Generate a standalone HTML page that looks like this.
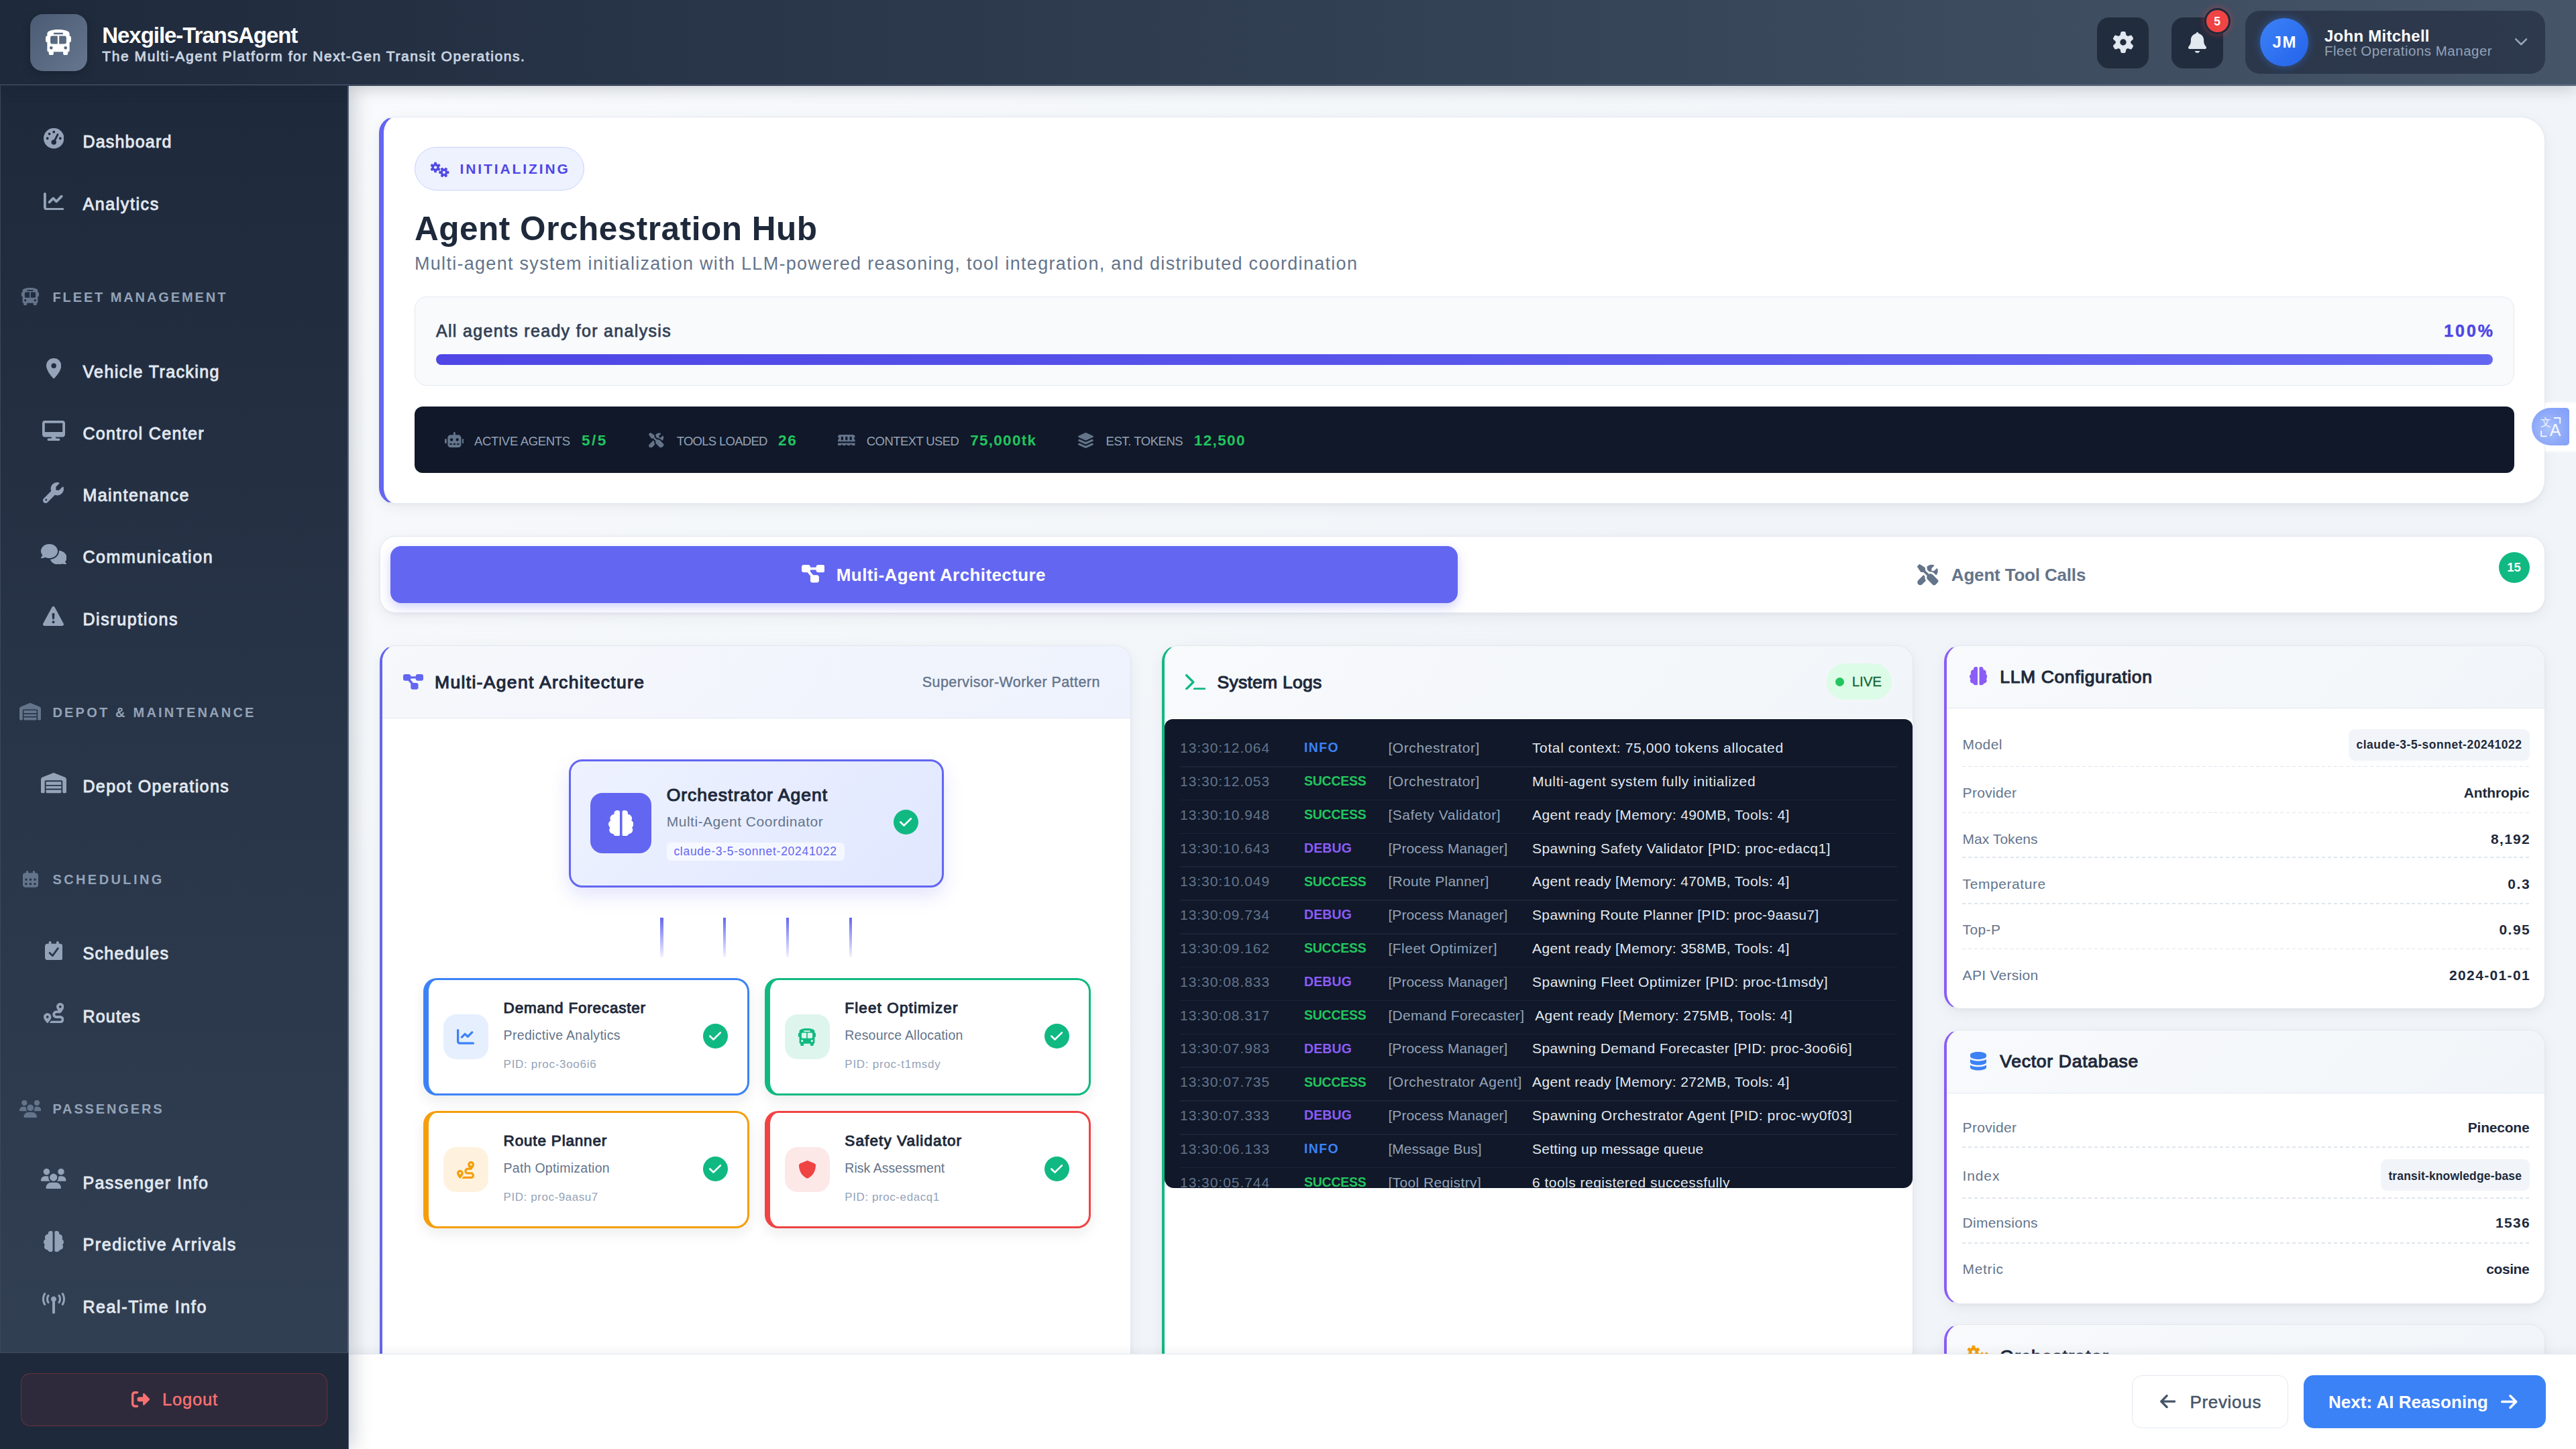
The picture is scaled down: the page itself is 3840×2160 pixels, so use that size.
<!DOCTYPE html>
<html lang="en"><head><meta charset="utf-8"><title>Nexgile-TransAgent</title>
<style>
html,body{margin:0;padding:0;}
body{width:3840px;height:2160px;overflow:hidden;background:#f1f5f9;font-family:"Liberation Sans",sans-serif;}
#root{position:relative;width:3840px;height:2160px;overflow:hidden;background:#f1f5f9;}
#root div,#root svg{position:absolute;box-sizing:border-box;}
.t{white-space:pre;}
.grp{position:absolute;left:0;top:0;width:0;height:0;}

</style></head><body><div id="root">
<main class="grp">
<div style="left:520px;top:128px;width:3320px;height:1892px;background:linear-gradient(135deg,#f8fafc 0%,#f1f5f9 50%,#f1f5f9 100%);"></div>
<div style="left:565px;top:173.5px;width:3229px;height:577px;background:#fff;border:1.5px solid #e2e8f0;border-left:7.5px solid #6366f1;border-radius:24px 36px 36px 24px;box-shadow:0 6px 22px rgba(15,23,42,.055),0 2px 5px rgba(15,23,42,.03);"></div>
<div style="left:618px;top:218.7px;width:253px;height:65px;background:#eef2ff;border:1.5px solid #c7d2fe;border-radius:33px;"></div>
<svg style="left:641.90px;top:241.85px;overflow:visible;" width="27.20" height="22.30" viewBox="0 0 272 223" preserveAspectRatio="none"><path fill="#4f46e5" fill-rule="evenodd" stroke="#4f46e5" stroke-width="8" stroke-linejoin="round" d="M44.75 29.53L54.78 25.07L55.41 1.64L86.59 1.64L87.22 25.07L97.25 29.53L97.25 29.53L106.13 35.98L126.74 24.82L142.33 51.82L122.35 64.08L123.50 75.00L123.50 75.00L122.35 85.92L142.33 98.18L126.74 125.18L106.13 114.02L97.25 120.47L97.25 120.47L87.22 124.93L86.59 148.36L55.41 148.36L54.78 124.93L44.75 120.47L44.75 120.47L35.87 114.02L15.26 125.18L-0.33 98.18L19.65 85.92L18.50 75.00L18.50 75.00L19.65 64.08L-0.33 51.82L15.26 24.82L35.87 35.98L44.75 29.53ZM45.50 75.00a25.50 25.50 0 1 0 51.00 0a25.50 25.50 0 1 0 -51.00 0ZM243.25 124.45L247.60 134.21L270.40 134.82L270.40 165.18L247.60 165.79L243.25 175.55L243.25 175.55L236.97 184.19L247.85 204.25L221.56 219.43L209.62 199.98L199.00 201.10L199.00 201.10L188.38 199.98L176.44 219.43L150.15 204.25L161.03 184.19L154.75 175.55L154.75 175.55L150.40 165.79L127.60 165.18L127.60 134.82L150.40 134.21L154.75 124.45L154.75 124.45L161.03 115.81L150.15 95.75L176.44 80.57L188.38 100.02L199.00 98.90L199.00 98.90L209.62 100.02L221.56 80.57L247.85 95.75L236.97 115.81L243.25 124.45ZM174.18 150.00a24.82 24.82 0 1 0 49.64 0a24.82 24.82 0 1 0 -49.64 0Z"/></svg>
<div class="t" style="left:685.60px;top:241.22px;font-size:21px;line-height:21px;color:#4f46e5;font-weight:700;letter-spacing:2.882px;">INITIALIZING</div>
<div class="t" style="left:618.00px;top:315.70px;font-size:49.5px;line-height:49.5px;color:#1e293b;font-weight:700;letter-spacing:0.521px;">Agent Orchestration Hub</div>
<div class="t" style="left:618.00px;top:380.04px;font-size:27px;line-height:27px;color:#64748b;letter-spacing:1.292px;">Multi-agent system initialization with LLM-powered reasoning, tool integration, and distributed coordination</div>
<div style="left:617.6px;top:441.8px;width:3130.4px;height:133px;background:#f8fafc;border:1.5px solid #e2e8f0;border-radius:18px;"></div>
<div class="t" style="left:650.00px;top:480.84px;font-size:25px;line-height:25px;color:#334155;letter-spacing:1.322px;-webkit-text-stroke:0.75px #334155;">All agents ready for analysis</div>
<div class="t" style="left:3643.30px;top:480.84px;font-size:25px;line-height:25px;color:#4f46e5;font-weight:700;letter-spacing:2.916px;-webkit-text-stroke:0.5px #4f46e5;">100%</div>
<div style="left:650px;top:528px;width:3066px;height:15.5px;background:linear-gradient(90deg,#4f46e5,#6366f1);border-radius:8px;"></div>
<div style="left:617.6px;top:606px;width:3130.4px;height:99px;background:#101829;border-radius:12px;"></div>
<svg style="left:662.50px;top:644.48px;" width="28.80" height="23.04" viewBox="0 -32 640 512" preserveAspectRatio="none"><path fill="#64748b" d="M352 0c0-17.7-14.3-32-32-32s-32 14.3-32 32v64h-96c-53 0-96 43-96 96v224c0 53 43 96 96 96h256c53 0 96-43 96-96V160c0-53-43-96-96-96h-96zM160 368c0-13.3 10.7-24 24-24h32c13.3 0 24 10.7 24 24s-10.7 24-24 24h-32c-13.3 0-24-10.7-24-24m120 0c0-13.3 10.7-24 24-24h32c13.3 0 24 10.7 24 24s-10.7 24-24 24h-32c-13.3 0-24-10.7-24-24m120 0c0-13.3 10.7-24 24-24h32c13.3 0 24 10.7 24 24s-10.7 24-24 24h-32c-13.3 0-24-10.7-24-24M224 176a48 48 0 1 1 0 96 48 48 0 1 1 0-96m144 48a48 48 0 1 1 96 0 48 48 0 1 1-96 0m-304 0c0-17.7-14.3-32-32-32S0 206.3 0 224v96c0 17.7 14.3 32 32 32s32-14.3 32-32zm544-32c-17.7 0-32 14.3-32 32v96c0 17.7 14.3 32 32 32s32-14.3 32-32v-96c0-17.7-14.3-32-32-32"/></svg>
<div class="t" style="left:707.00px;top:648.94px;font-size:18.5px;line-height:18.5px;color:#94a3b8;letter-spacing:-0.318px;">ACTIVE AGENTS</div>
<div class="t" style="left:867.00px;top:645.55px;font-size:22.5px;line-height:22.5px;color:#22c55e;font-weight:700;letter-spacing:2.459px;">5/5</div>
<svg style="left:966.85px;top:644.65px;" width="22.70" height="22.70" viewBox="20.7236 -11.3764 535.501 535.501" preserveAspectRatio="none"><path fill="#64748b" d="M70.8-6.7c5.4-5.4 13.8-6.2 20.2-2l118.9 79.2c8.9 5.9 14.2 15.9 14.2 26.6v49.6l90.8 90.8c33.3-15 73.9-8.9 101.2 18.5l126.1 126.1c18.7 18.7 18.7 49.1 0 67.9l-60.1 60.1c-18.7 18.7-49.1 18.7-67.9 0L288.1 384c-27.4-27.4-33.5-67.9-18.5-101.2L178.8 192h-49.6c-10.7 0-20.7-5.3-26.6-14.2L23.4 58.9c-4.2-6.3-3.4-14.8 2-20.2zm145 303.5c-6.3 36.9 2.3 75.9 26.2 107.2l-94.9 95c-28.1 28.1-73.7 28.1-101.8 0s-28.1-73.7 0-101.8l135.4-135.5 35.2 35.1zM384.1 0c20.1 0 39.4 3.7 57.1 10.5 10 3.8 11.8 16.5 4.3 24.1l-56.7 56.7c-3 3-4.7 7.1-4.7 11.3V144c0 8.8 7.2 16 16 16h41.4c4.2 0 8.3-1.7 11.3-4.7l56.7-56.7c7.6-7.5 20.3-5.7 24.1 4.3 6.8 17.7 10.5 37 10.5 57.1 0 43.2-17.2 82.3-45 111.1L450 222c-33.1-33-78.5-45.7-121.1-38.4l-56.8-56.8V97.1l-.2-5c-.8-12.4-4.4-24.3-10.5-34.9C290.8 22.2 334.8 0 384.1-.1z"/></svg>
<div class="t" style="left:1008.70px;top:648.94px;font-size:18.5px;line-height:18.5px;color:#94a3b8;letter-spacing:-0.718px;">TOOLS LOADED</div>
<div class="t" style="left:1160.00px;top:645.55px;font-size:22.5px;line-height:22.5px;color:#22c55e;font-weight:700;letter-spacing:1.769px;">26</div>
<svg style="left:1249.00px;top:647.70px;" width="25.60" height="16.60" viewBox="0 64 512 384" preserveAspectRatio="none"><path fill="#64748b" d="M64 64C28.7 64 0 92.7 0 128v7.4c0 6.8 4.4 12.6 10.1 16.3C23.3 160.3 32 175.1 32 192s-8.7 31.7-21.9 40.3C4.4 236 0 241.8 0 248.6V304h512v-55.4c0-6.8-4.4-12.6-10.1-16.3-13.2-8.6-21.9-23.4-21.9-40.3s8.7-31.7 21.9-40.3c5.7-3.7 10.1-9.5 10.1-16.3V128c0-35.3-28.7-64-64-64zm448 352v-64H0v64c0 17.7 14.3 32 32 32h64v-24c0-13.3 10.7-24 24-24s24 10.7 24 24v24h88v-24c0-13.3 10.7-24 24-24s24 10.7 24 24v24h88v-24c0-13.3 10.7-24 24-24s24 10.7 24 24v24h64c17.7 0 32-14.3 32-32M160 160v64c0 17.7-14.3 32-32 32s-32-14.3-32-32v-64c0-17.7 14.3-32 32-32s32 14.3 32 32m128 0v64c0 17.7-14.3 32-32 32s-32-14.3-32-32v-64c0-17.7 14.3-32 32-32s32 14.3 32 32m128 0v64c0 17.7-14.3 32-32 32s-32-14.3-32-32v-64c0-17.7 14.3-32 32-32s32 14.3 32 32"/></svg>
<div class="t" style="left:1291.80px;top:648.94px;font-size:18.5px;line-height:18.5px;color:#94a3b8;letter-spacing:-0.583px;">CONTEXT USED</div>
<div class="t" style="left:1446.20px;top:645.55px;font-size:22.5px;line-height:22.5px;color:#22c55e;font-weight:700;letter-spacing:1.282px;">75,000tk</div>
<svg style="left:1607.00px;top:644.50px;" width="23.00" height="23.00" viewBox="0 0.0249996 512 511.95" preserveAspectRatio="none"><path fill="#64748b" d="M232.5 5.2c14.9-6.9 32.1-6.9 47 0l218.6 101c8.5 3.9 13.9 12.4 13.9 21.8s-5.4 17.9-13.9 21.8l-218.6 101c-14.9 6.9-32.1 6.9-47 0l-218.6-101C5.4 145.8 0 137.3 0 128s5.4-17.9 13.9-21.8zM48.1 218.4l164.3 75.9c27.7 12.8 59.6 12.8 87.3 0L464 218.4l34.1 15.8c8.5 3.9 13.9 12.4 13.9 21.8s-5.4 17.9-13.9 21.8l-218.6 101c-14.9 6.9-32.1 6.9-47 0l-218.6-101C5.4 273.8 0 265.3 0 256s5.4-17.9 13.9-21.8L48 218.4zM13.9 362.2 48 346.4l164.3 75.9c27.7 12.8 59.6 12.8 87.3 0l164.3-75.9 34.1 15.8c8.5 3.9 13.9 12.4 13.9 21.8s-5.4 17.9-13.9 21.8l-218.6 101c-14.9 6.9-32.1 6.9-47 0l-218.5-101C5.4 401.8 0 393.3 0 384s5.4-17.9 13.9-21.8"/></svg>
<div class="t" style="left:1648.60px;top:648.94px;font-size:18.5px;line-height:18.5px;color:#94a3b8;letter-spacing:-0.451px;">EST. TOKENS</div>
<div class="t" style="left:1779.80px;top:645.55px;font-size:22.5px;line-height:22.5px;color:#22c55e;font-weight:700;letter-spacing:1.374px;">12,500</div>
<div style="left:566px;top:799px;width:3228px;height:115.3px;background:#fff;border:1.5px solid #e2e8f0;border-radius:24px;box-shadow:0 6px 22px rgba(15,23,42,.055),0 2px 5px rgba(15,23,42,.03);"></div>
<div style="left:582px;top:814.2px;width:1591px;height:84.4px;background:#6366f1;border-radius:16px;box-shadow:0 6px 16px rgba(99,102,241,.3);"></div>
<svg style="left:1194.75px;top:842.35px;" width="34.50" height="26.50" viewBox="0 32 512 448" preserveAspectRatio="none"><path fill="#fff" d="M0 80c0-26.5 21.5-48 48-48h96c26.5 0 48 21.5 48 48v16h128V80c0-26.5 21.5-48 48-48h96c26.5 0 48 21.5 48 48v96c0 26.5-21.5 48-48 48h-96c-26.5 0-48-21.5-48-48v-16H192v16c0 7.3-1.7 14.3-4.6 20.5L256 288h80c26.5 0 48 21.5 48 48v96c0 26.5-21.5 48-48 48h-96c-26.5 0-48-21.5-48-48v-96c0-7.3 1.7-14.3 4.6-20.5L128 224H48c-26.5 0-48-21.5-48-48z"/></svg>
<div class="t" style="left:1246.80px;top:843.59px;font-size:26px;line-height:26px;color:#fff;font-weight:700;letter-spacing:0.409px;">Multi-Agent Architecture</div>
<svg style="left:2858.05px;top:841.25px;" width="31.50" height="31.50" viewBox="20.7236 -11.3764 535.501 535.501" preserveAspectRatio="none"><path fill="#64748b" d="M70.8-6.7c5.4-5.4 13.8-6.2 20.2-2l118.9 79.2c8.9 5.9 14.2 15.9 14.2 26.6v49.6l90.8 90.8c33.3-15 73.9-8.9 101.2 18.5l126.1 126.1c18.7 18.7 18.7 49.1 0 67.9l-60.1 60.1c-18.7 18.7-49.1 18.7-67.9 0L288.1 384c-27.4-27.4-33.5-67.9-18.5-101.2L178.8 192h-49.6c-10.7 0-20.7-5.3-26.6-14.2L23.4 58.9c-4.2-6.3-3.4-14.8 2-20.2zm145 303.5c-6.3 36.9 2.3 75.9 26.2 107.2l-94.9 95c-28.1 28.1-73.7 28.1-101.8 0s-28.1-73.7 0-101.8l135.4-135.5 35.2 35.1zM384.1 0c20.1 0 39.4 3.7 57.1 10.5 10 3.8 11.8 16.5 4.3 24.1l-56.7 56.7c-3 3-4.7 7.1-4.7 11.3V144c0 8.8 7.2 16 16 16h41.4c4.2 0 8.3-1.7 11.3-4.7l56.7-56.7c7.6-7.5 20.3-5.7 24.1 4.3 6.8 17.7 10.5 37 10.5 57.1 0 43.2-17.2 82.3-45 111.1L450 222c-33.1-33-78.5-45.7-121.1-38.4l-56.8-56.8V97.1l-.2-5c-.8-12.4-4.4-24.3-10.5-34.9C290.8 22.2 334.8 0 384.1-.1z"/></svg>
<div class="t" style="left:2908.80px;top:843.79px;font-size:26px;line-height:26px;color:#64748b;font-weight:700;letter-spacing:-0.174px;">Agent Tool Calls</div>
<div style="left:3724.6px;top:823px;width:46px;height:46px;background:#10b981;border-radius:50%;"></div>
<div class="t" style="left:3737.31px;top:836.84px;font-size:18.5px;line-height:18.5px;color:#fff;font-weight:700;">15</div>
<div style="left:565.5px;top:961.7px;width:1120px;height:1100px;background:#fff;border:1.5px solid #e2e8f0;border-left:4.5px solid #6366f1;border-radius:24px;overflow:hidden;box-shadow:0 6px 22px rgba(15,23,42,.055),0 2px 5px rgba(15,23,42,.03);"><div style="left:0;top:0;width:100%;height:108.2px;background:linear-gradient(135deg,#f6f8fb,#eef2fd);border-bottom:1.5px solid #e2e8f0;"></div></div>
<svg style="left:601.30px;top:1004.90px;" width="30.00" height="22.80" viewBox="0 32 512 448" preserveAspectRatio="none"><path fill="#6366f1" d="M0 80c0-26.5 21.5-48 48-48h96c26.5 0 48 21.5 48 48v16h128V80c0-26.5 21.5-48 48-48h96c26.5 0 48 21.5 48 48v96c0 26.5-21.5 48-48 48h-96c-26.5 0-48-21.5-48-48v-16H192v16c0 7.3-1.7 14.3-4.6 20.5L256 288h80c26.5 0 48 21.5 48 48v96c0 26.5-21.5 48-48 48h-96c-26.5 0-48-21.5-48-48v-96c0-7.3 1.7-14.3 4.6-20.5L128 224H48c-26.5 0-48-21.5-48-48z"/></svg>
<div class="t" style="left:648.00px;top:1004.17px;font-size:26.5px;line-height:26.5px;color:#1e293b;letter-spacing:1.334px;-webkit-text-stroke:1.1px #1e293b;">Multi-Agent Architecture</div>
<div class="t" style="left:1374.80px;top:1007.00px;font-size:21.5px;line-height:21.5px;color:#64748b;letter-spacing:0.437px;-webkit-text-stroke:0.4px #64748b;">Supervisor-Worker Pattern</div>
<div style="left:848.4px;top:1131.5px;width:559px;height:191.5px;background:linear-gradient(135deg,#eef2ff,#e0e7ff);border:3px solid #6366f1;border-radius:20px;box-shadow:0 12px 28px rgba(99,102,241,.18);"></div>
<div style="left:880px;top:1182px;width:90.5px;height:90px;background:#6366f1;border-radius:18px;"></div>
<svg style="left:906.55px;top:1207.65px;" width="37.50" height="38.71" viewBox="8 0 496 512" preserveAspectRatio="none"><path fill="#fff" d="M120 56c0-30.9 25.1-56 56-56h24c17.7 0 32 14.3 32 32v448c0 17.7-14.3 32-32 32h-32c-29.8 0-54.9-20.4-62-48h-2c-44.2 0-80-35.8-80-80 0-18 6-34.6 16-48-19.4-14.6-32-37.8-32-64 0-30.9 17.6-57.8 43.2-71.1-7.1-12-11.2-26-11.2-40.9 0-44.2 35.8-80 80-80zm272 0v24c44.2 0 80 35.8 80 80 0 15-4.1 29-11.2 40.9C486.5 214.2 504 241 504 272c0 26.2-12.6 49.4-32 64 10 13.4 16 30 16 48 0 44.2-35.8 80-80 80h-2c-7.1 27.6-32.2 48-62 48h-32c-17.7 0-32-14.3-32-32V32c0-17.7 14.3-32 32-32h24c30.9 0 56 25.1 56 56"/></svg>
<div class="t" style="left:993.70px;top:1171.87px;font-size:26.5px;line-height:26.5px;color:#1e293b;letter-spacing:0.999px;-webkit-text-stroke:1.1px #1e293b;">Orchestrator Agent</div>
<div class="t" style="left:993.70px;top:1213.92px;font-size:21px;line-height:21px;color:#64748b;letter-spacing:0.510px;">Multi-Agent Coordinator</div>
<div style="left:994px;top:1255.8px;width:264.8px;height:27.6px;background:rgba(255,255,255,.6);border-radius:6px;"></div>
<div class="t" style="left:1004.40px;top:1261.39px;font-size:17.5px;line-height:17.5px;color:#6366f1;letter-spacing:0.714px;">claude-3-5-sonnet-20241022</div>
<div style="left:1331.9px;top:1207px;width:37.2px;height:37.2px;background:#10b981;border-radius:50%;"></div>
<svg style="left:1341.40px;top:1219.40px;" width="18.20" height="13.00" viewBox="-0.0749969 96.025 448.05 320.05" preserveAspectRatio="none"><path fill="#fff" d="M438.600 105.400c12.500 12.500 12.500 32.800 0 45.300l-256 256c-12.500 12.500-32.800 12.500-45.300 0l-128-128c-12.500-12.500-12.500-32.800 0-45.300s32.800-12.500 45.300 0L160 338.700 393.400 105.400c12.500-12.500 32.800-12.500 45.300 0z"/></svg>
<div style="left:984.1px;top:1367.6px;width:4.5px;height:59.5px;background:linear-gradient(180deg,#6366f1,rgba(99,102,241,.08));"></div>
<div style="left:1077.8px;top:1367.6px;width:4.5px;height:59.5px;background:linear-gradient(180deg,#6366f1,rgba(99,102,241,.08));"></div>
<div style="left:1171.8px;top:1367.6px;width:4.5px;height:59.5px;background:linear-gradient(180deg,#6366f1,rgba(99,102,241,.08));"></div>
<div style="left:1265.8px;top:1367.6px;width:4.5px;height:59.5px;background:linear-gradient(180deg,#6366f1,rgba(99,102,241,.08));"></div>
<div style="left:630.8px;top:1457.9px;width:486px;height:175px;background:#fff;border:3px solid #3b82f6;border-left:8px solid #3b82f6;border-radius:20px;box-shadow:0 8px 20px rgba(15,23,42,.08);"></div>
<div style="left:661.1px;top:1512.1px;width:67px;height:67px;background:rgba(59,130,246,.13);border-radius:19px;"></div>
<svg style="left:681.40px;top:1534.12px;" width="26.00" height="22.75" viewBox="0 32 512 448" preserveAspectRatio="none"><path fill="#3b82f6" d="M64 64c0-17.7-14.3-32-32-32S0 46.3 0 64v336c0 44.2 35.8 80 80 80h400c17.7 0 32-14.3 32-32s-14.3-32-32-32H80c-8.8 0-16-7.2-16-16zm406.6 86.6c12.5-12.5 12.5-32.8 0-45.3s-32.8-12.5-45.3 0L320 210.7l-57.4-57.3c-12.5-12.5-32.8-12.5-45.3 0l-96 96c-12.5 12.5-12.5 32.8 0 45.3s32.8 12.5 45.3 0l73.4-73.4 57.4 57.4c12.5 12.5 32.8 12.5 45.3 0l128-128z"/></svg>
<div class="t" style="left:750.60px;top:1492.25px;font-size:22.5px;line-height:22.5px;color:#1e293b;letter-spacing:0.791px;-webkit-text-stroke:1px #1e293b;">Demand Forecaster</div>
<div class="t" style="left:750.60px;top:1534.29px;font-size:19.5px;line-height:19.5px;color:#64748b;letter-spacing:0.316px;">Predictive Analytics</div>
<div class="t" style="left:750.60px;top:1577.71px;font-size:17px;line-height:17px;color:#94a3b8;letter-spacing:0.695px;">PID: proc-3oo6i6</div>
<div style="left:1047.8px;top:1525.5px;width:37.2px;height:37.2px;background:#10b981;border-radius:50%;"></div>
<svg style="left:1057.30px;top:1537.90px;" width="18.20" height="13.00" viewBox="-0.0749969 96.025 448.05 320.05" preserveAspectRatio="none"><path fill="#fff" d="M438.600 105.400c12.500 12.500 12.500 32.800 0 45.300l-256 256c-12.500 12.500-32.800 12.500-45.300 0l-128-128c-12.500-12.500-12.500-32.800 0-45.300s32.800-12.500 45.300 0L160 338.700 393.400 105.400c12.500-12.500 32.800-12.500 45.300 0z"/></svg>
<div style="left:1139.5px;top:1457.9px;width:486px;height:175px;background:#fff;border:3px solid #10b981;border-left:8px solid #10b981;border-radius:20px;box-shadow:0 8px 20px rgba(15,23,42,.08);"></div>
<div style="left:1169.8px;top:1512.1px;width:67px;height:67px;background:rgba(16,185,129,.14);border-radius:19px;"></div>
<svg style="left:1190.10px;top:1532.50px;" width="26.00" height="26.00" viewBox="32 0 512 512" preserveAspectRatio="none"><path fill="#10b981" d="M288 0C422.4 0 512 35.2 512 80V96l0 32c17.7 0 32 14.3 32 32v64c0 17.7-14.3 32-32 32l0 160c0 17.7-14.3 32-32 32v32c0 17.7-14.3 32-32 32H416c-17.7 0-32-14.3-32-32V448H192v32c0 17.7-14.3 32-32 32H128c-17.7 0-32-14.3-32-32l0-32c-17.7 0-32-14.3-32-32l0-160c-17.7 0-32-14.3-32-32V160c0-17.7 14.3-32 32-32h0V96h0V80C64 35.2 153.6 0 288 0zM128 160v96c0 17.7 14.3 32 32 32H272V128H160c-17.7 0-32 14.3-32 32zM304 288H416c17.7 0 32-14.3 32-32V160c0-17.7-14.3-32-32-32H304V288zM144 400a32 32 0 1 0 0-64 32 32 0 1 0 0 64zm288 0a32 32 0 1 0 0-64 32 32 0 1 0 0 64zM384 80c0-8.800-7.200-16-16-16H208c-8.800 0-16 7.200-16 16s7.200 16 16 16H368c8.800 0 16-7.200 16-16z"/></svg>
<div class="t" style="left:1259.30px;top:1492.25px;font-size:22.5px;line-height:22.5px;color:#1e293b;letter-spacing:1.118px;-webkit-text-stroke:1px #1e293b;">Fleet Optimizer</div>
<div class="t" style="left:1259.30px;top:1534.29px;font-size:19.5px;line-height:19.5px;color:#64748b;letter-spacing:0.202px;">Resource Allocation</div>
<div class="t" style="left:1259.30px;top:1577.71px;font-size:17px;line-height:17px;color:#94a3b8;letter-spacing:0.746px;">PID: proc-t1msdy</div>
<div style="left:1556.5px;top:1525.5px;width:37.2px;height:37.2px;background:#10b981;border-radius:50%;"></div>
<svg style="left:1566.00px;top:1537.90px;" width="18.20" height="13.00" viewBox="-0.0749969 96.025 448.05 320.05" preserveAspectRatio="none"><path fill="#fff" d="M438.600 105.400c12.500 12.500 12.500 32.800 0 45.300l-256 256c-12.500 12.500-32.800 12.500-45.300 0l-128-128c-12.500-12.500-12.500-32.800 0-45.300s32.800-12.500 45.300 0L160 338.700 393.400 105.400c12.500-12.500 32.800-12.500 45.300 0z"/></svg>
<div style="left:630.8px;top:1656px;width:486px;height:175px;background:#fff;border:3px solid #f59e0b;border-left:8px solid #f59e0b;border-radius:20px;box-shadow:0 8px 20px rgba(15,23,42,.08);"></div>
<div style="left:661.1px;top:1710.2px;width:67px;height:67px;background:rgba(245,158,11,.13);border-radius:19px;"></div>
<svg style="left:681.40px;top:1730.60px;" width="26.00" height="26.00" viewBox="0 0 512 512" preserveAspectRatio="none"><path fill="#f59e0b" d="M512 96c0 50.2-59.1 125.1-84.6 155-3.8 4.4-9.4 6.1-14.5 5H320c-17.7 0-32 14.3-32 32s14.3 32 32 32h96c53 0 96 43 96 96s-43 96-96 96H139.6c8.7-9.9 19.3-22.6 30-36.8 6.3-8.4 12.8-17.6 19-27.2H416c17.7 0 32-14.3 32-32s-14.3-32-32-32h-96c-53 0-96-43-96-96s43-96 96-96h39.8c-21-31.5-39.8-67.7-39.8-96 0-53 43-96 96-96s96 43 96 96M117.1 489.1c-3.8 4.3-7.2 8.1-10.1 11.3l-1.8 2-.2-.2c-6 4.6-14.6 4-20-1.8C59.8 473 0 402.5 0 352c0-53 43-96 96-96s96 43 96 96c0 30-21.1 67-43.5 97.9-10.7 14.7-21.7 28-30.8 38.5zM128 352a32 32 0 1 0-64 0 32 32 0 1 0 64 0m288-224a32 32 0 1 0 0-64 32 32 0 1 0 0 64"/></svg>
<div class="t" style="left:750.60px;top:1690.35px;font-size:22.5px;line-height:22.5px;color:#1e293b;letter-spacing:0.820px;-webkit-text-stroke:1px #1e293b;">Route Planner</div>
<div class="t" style="left:750.60px;top:1732.39px;font-size:19.5px;line-height:19.5px;color:#64748b;letter-spacing:0.256px;">Path Optimization</div>
<div class="t" style="left:750.60px;top:1775.81px;font-size:17px;line-height:17px;color:#94a3b8;letter-spacing:0.560px;">PID: proc-9aasu7</div>
<div style="left:1047.8px;top:1723.6px;width:37.2px;height:37.2px;background:#10b981;border-radius:50%;"></div>
<svg style="left:1057.30px;top:1736.00px;" width="18.20" height="13.00" viewBox="-0.0749969 96.025 448.05 320.05" preserveAspectRatio="none"><path fill="#fff" d="M438.600 105.400c12.500 12.500 12.500 32.800 0 45.300l-256 256c-12.500 12.500-32.800 12.500-45.300 0l-128-128c-12.500-12.500-12.500-32.800 0-45.300s32.800-12.500 45.300 0L160 338.700 393.400 105.400c12.500-12.500 32.800-12.500 45.300 0z"/></svg>
<div style="left:1139.5px;top:1656px;width:486px;height:175px;background:#fff;border:3px solid #ef4444;border-left:8px solid #ef4444;border-radius:20px;box-shadow:0 8px 20px rgba(15,23,42,.08);"></div>
<div style="left:1169.8px;top:1710.2px;width:67px;height:67px;background:rgba(239,68,68,.12);border-radius:19px;"></div>
<svg style="left:1190.60px;top:1730.34px;" width="25.00" height="26.52" viewBox="16.0995 0 480.001 509.2" preserveAspectRatio="none"><path fill="#ef4444" d="M256 0c4.6 0 9.2 1 13.4 2.9l188.4 79.9c22 9.3 38.4 31 38.3 57.2-.5 99.2-41.3 280.7-213.6 363.2-16.7 8-36.1 8-52.8 0C57.3 420.7 16.6 239.2 16.1 140c-.1-26.2 16.3-47.9 38.3-57.2L242.7 2.9C246.9 1 251.4 0 256 0"/></svg>
<div class="t" style="left:1259.30px;top:1690.35px;font-size:22.5px;line-height:22.5px;color:#1e293b;letter-spacing:1.109px;-webkit-text-stroke:1px #1e293b;">Safety Validator</div>
<div class="t" style="left:1259.30px;top:1732.39px;font-size:19.5px;line-height:19.5px;color:#64748b;letter-spacing:0.038px;">Risk Assessment</div>
<div class="t" style="left:1259.30px;top:1775.81px;font-size:17px;line-height:17px;color:#94a3b8;letter-spacing:0.580px;">PID: proc-edacq1</div>
<div style="left:1556.5px;top:1723.6px;width:37.2px;height:37.2px;background:#10b981;border-radius:50%;"></div>
<svg style="left:1566.00px;top:1736.00px;" width="18.20" height="13.00" viewBox="-0.0749969 96.025 448.05 320.05" preserveAspectRatio="none"><path fill="#fff" d="M438.600 105.400c12.500 12.500 12.500 32.800 0 45.300l-256 256c-12.500 12.500-32.800 12.500-45.300 0l-128-128c-12.500-12.500-12.500-32.800 0-45.300s32.800-12.500 45.300 0L160 338.700 393.400 105.400c12.500-12.500 32.800-12.500 45.300 0z"/></svg>
<div style="left:1731.5px;top:961.7px;width:1120px;height:1100px;background:#fff;border:1.5px solid #e2e8f0;border-left:4.5px solid #10b981;border-radius:24px;overflow:hidden;box-shadow:0 6px 22px rgba(15,23,42,.055),0 2px 5px rgba(15,23,42,.03);"><div style="left:0;top:0;width:100%;height:108px;background:linear-gradient(135deg,#f8fafc,#f1f5f9);"></div></div>
<svg style="left:1766.60px;top:1004.68px;" width="30.40" height="23.65" viewBox="0.0249977 32.025 575.975 448.05" preserveAspectRatio="none"><path fill="#10b981" d="M9.400 86.600C-3.100 74.100-3.100 53.900 9.400 41.400s32.800-12.500 45.300 0l192 192c12.500 12.500 12.500 32.800 0 45.300l-192 192c-12.500 12.500-32.800 12.500-45.300 0s-12.500-32.800 0-45.300L178.700 256 9.400 86.600zM256 416H544c17.700 0 32 14.300 32 32s-14.300 32-32 32H256c-17.700 0-32-14.300-32-32s14.300-32 32-32z"/></svg>
<div class="t" style="left:1814.60px;top:1004.17px;font-size:26.5px;line-height:26.5px;color:#1e293b;letter-spacing:0.241px;-webkit-text-stroke:1.1px #1e293b;">System Logs</div>
<div style="left:2722.5px;top:989px;width:97.8px;height:54.4px;background:#dcfce7;border-radius:28px;"></div>
<div style="left:2735.5px;top:1009.7px;width:13px;height:13px;background:#22c55e;border-radius:50%;"></div>
<div class="t" style="left:2760.70px;top:1006.25px;font-size:20.5px;line-height:20.5px;color:#166534;letter-spacing:-0.051px;-webkit-text-stroke:0.3px #166534;">LIVE</div>
<div style="left:1736.3px;top:1071.8px;width:1115.2px;height:699px;background:#101829;border-radius:12px 12px 14px 14px;"></div>
<div class="t" style="left:1759.00px;top:1104.02px;font-size:21px;line-height:21px;color:#64748b;letter-spacing:0.961px;">13:30:12.064</div>
<div class="t" style="left:1944.00px;top:1105.29px;font-size:19.5px;line-height:19.5px;color:#3b82f6;font-weight:700;letter-spacing:1.402px;">INFO</div>
<div class="t" style="left:2069.40px;top:1104.02px;font-size:21px;line-height:21px;color:#94a3b8;letter-spacing:0.587px;">[Orchestrator]</div>
<div class="t" style="left:2284.00px;top:1104.02px;font-size:21px;line-height:21px;color:#e2e8f0;letter-spacing:0.613px;">Total context: 75,000 tokens allocated</div>
<div style="left:1759px;top:1142px;width:1069px;height:1.5px;background:rgba(148,163,184,.09);"></div>
<div class="t" style="left:1759.00px;top:1153.85px;font-size:21px;line-height:21px;color:#64748b;letter-spacing:0.961px;">13:30:12.053</div>
<div class="t" style="left:1944.00px;top:1155.12px;font-size:19.5px;line-height:19.5px;color:#22c55e;font-weight:700;letter-spacing:-0.264px;">SUCCESS</div>
<div class="t" style="left:2069.40px;top:1153.85px;font-size:21px;line-height:21px;color:#94a3b8;letter-spacing:0.587px;">[Orchestrator]</div>
<div class="t" style="left:2284.00px;top:1153.85px;font-size:21px;line-height:21px;color:#e2e8f0;letter-spacing:0.599px;">Multi-agent system fully initialized</div>
<div style="left:1759px;top:1191.83px;width:1069px;height:1.5px;background:rgba(148,163,184,.09);"></div>
<div class="t" style="left:1759.00px;top:1203.68px;font-size:21px;line-height:21px;color:#64748b;letter-spacing:0.961px;">13:30:10.948</div>
<div class="t" style="left:1944.00px;top:1204.95px;font-size:19.5px;line-height:19.5px;color:#22c55e;font-weight:700;letter-spacing:-0.264px;">SUCCESS</div>
<div class="t" style="left:2069.40px;top:1203.68px;font-size:21px;line-height:21px;color:#94a3b8;letter-spacing:0.519px;">[Safety Validator]</div>
<div class="t" style="left:2284.00px;top:1203.68px;font-size:21px;line-height:21px;color:#e2e8f0;letter-spacing:0.415px;">Agent ready [Memory: 490MB, Tools: 4]</div>
<div style="left:1759px;top:1241.66px;width:1069px;height:1.5px;background:rgba(148,163,184,.09);"></div>
<div class="t" style="left:1759.00px;top:1253.51px;font-size:21px;line-height:21px;color:#64748b;letter-spacing:0.961px;">13:30:10.643</div>
<div class="t" style="left:1944.00px;top:1254.78px;font-size:19.5px;line-height:19.5px;color:#8b5cf6;font-weight:700;letter-spacing:0.095px;">DEBUG</div>
<div class="t" style="left:2069.40px;top:1253.51px;font-size:21px;line-height:21px;color:#94a3b8;letter-spacing:0.109px;">[Process Manager]</div>
<div class="t" style="left:2284.00px;top:1253.51px;font-size:21px;line-height:21px;color:#e2e8f0;letter-spacing:0.435px;">Spawning Safety Validator [PID: proc-edacq1]</div>
<div style="left:1759px;top:1291.49px;width:1069px;height:1.5px;background:rgba(148,163,184,.09);"></div>
<div class="t" style="left:1759.00px;top:1303.34px;font-size:21px;line-height:21px;color:#64748b;letter-spacing:0.961px;">13:30:10.049</div>
<div class="t" style="left:1944.00px;top:1304.61px;font-size:19.5px;line-height:19.5px;color:#22c55e;font-weight:700;letter-spacing:-0.264px;">SUCCESS</div>
<div class="t" style="left:2069.40px;top:1303.34px;font-size:21px;line-height:21px;color:#94a3b8;letter-spacing:0.290px;">[Route Planner]</div>
<div class="t" style="left:2284.00px;top:1303.34px;font-size:21px;line-height:21px;color:#e2e8f0;letter-spacing:0.415px;">Agent ready [Memory: 470MB, Tools: 4]</div>
<div style="left:1759px;top:1341.32px;width:1069px;height:1.5px;background:rgba(148,163,184,.09);"></div>
<div class="t" style="left:1759.00px;top:1353.17px;font-size:21px;line-height:21px;color:#64748b;letter-spacing:0.961px;">13:30:09.734</div>
<div class="t" style="left:1944.00px;top:1354.44px;font-size:19.5px;line-height:19.5px;color:#8b5cf6;font-weight:700;letter-spacing:0.095px;">DEBUG</div>
<div class="t" style="left:2069.40px;top:1353.17px;font-size:21px;line-height:21px;color:#94a3b8;letter-spacing:0.109px;">[Process Manager]</div>
<div class="t" style="left:2284.00px;top:1353.17px;font-size:21px;line-height:21px;color:#e2e8f0;letter-spacing:0.349px;">Spawning Route Planner [PID: proc-9aasu7]</div>
<div style="left:1759px;top:1391.15px;width:1069px;height:1.5px;background:rgba(148,163,184,.09);"></div>
<div class="t" style="left:1759.00px;top:1403.00px;font-size:21px;line-height:21px;color:#64748b;letter-spacing:0.961px;">13:30:09.162</div>
<div class="t" style="left:1944.00px;top:1404.27px;font-size:19.5px;line-height:19.5px;color:#22c55e;font-weight:700;letter-spacing:-0.264px;">SUCCESS</div>
<div class="t" style="left:2069.40px;top:1403.00px;font-size:21px;line-height:21px;color:#94a3b8;letter-spacing:0.503px;">[Fleet Optimizer]</div>
<div class="t" style="left:2284.00px;top:1403.00px;font-size:21px;line-height:21px;color:#e2e8f0;letter-spacing:0.415px;">Agent ready [Memory: 358MB, Tools: 4]</div>
<div style="left:1759px;top:1440.98px;width:1069px;height:1.5px;background:rgba(148,163,184,.09);"></div>
<div class="t" style="left:1759.00px;top:1452.83px;font-size:21px;line-height:21px;color:#64748b;letter-spacing:0.961px;">13:30:08.833</div>
<div class="t" style="left:1944.00px;top:1454.10px;font-size:19.5px;line-height:19.5px;color:#8b5cf6;font-weight:700;letter-spacing:0.095px;">DEBUG</div>
<div class="t" style="left:2069.40px;top:1452.83px;font-size:21px;line-height:21px;color:#94a3b8;letter-spacing:0.109px;">[Process Manager]</div>
<div class="t" style="left:2284.00px;top:1452.83px;font-size:21px;line-height:21px;color:#e2e8f0;letter-spacing:0.489px;">Spawning Fleet Optimizer [PID: proc-t1msdy]</div>
<div style="left:1759px;top:1490.81px;width:1069px;height:1.5px;background:rgba(148,163,184,.09);"></div>
<div class="t" style="left:1759.00px;top:1502.66px;font-size:21px;line-height:21px;color:#64748b;letter-spacing:0.961px;">13:30:08.317</div>
<div class="t" style="left:1944.00px;top:1503.93px;font-size:19.5px;line-height:19.5px;color:#22c55e;font-weight:700;letter-spacing:-0.264px;">SUCCESS</div>
<div class="t" style="left:2069.40px;top:1502.66px;font-size:21px;line-height:21px;color:#94a3b8;letter-spacing:0.297px;">[Demand Forecaster]</div>
<div class="t" style="left:2288.20px;top:1502.66px;font-size:21px;line-height:21px;color:#e2e8f0;letter-spacing:0.415px;">Agent ready [Memory: 275MB, Tools: 4]</div>
<div style="left:1759px;top:1540.64px;width:1069px;height:1.5px;background:rgba(148,163,184,.09);"></div>
<div class="t" style="left:1759.00px;top:1552.49px;font-size:21px;line-height:21px;color:#64748b;letter-spacing:0.961px;">13:30:07.983</div>
<div class="t" style="left:1944.00px;top:1553.76px;font-size:19.5px;line-height:19.5px;color:#8b5cf6;font-weight:700;letter-spacing:0.095px;">DEBUG</div>
<div class="t" style="left:2069.40px;top:1552.49px;font-size:21px;line-height:21px;color:#94a3b8;letter-spacing:0.109px;">[Process Manager]</div>
<div class="t" style="left:2284.00px;top:1552.49px;font-size:21px;line-height:21px;color:#e2e8f0;letter-spacing:0.404px;">Spawning Demand Forecaster [PID: proc-3oo6i6]</div>
<div style="left:1759px;top:1590.47px;width:1069px;height:1.5px;background:rgba(148,163,184,.09);"></div>
<div class="t" style="left:1759.00px;top:1602.32px;font-size:21px;line-height:21px;color:#64748b;letter-spacing:0.961px;">13:30:07.735</div>
<div class="t" style="left:1944.00px;top:1603.59px;font-size:19.5px;line-height:19.5px;color:#22c55e;font-weight:700;letter-spacing:-0.264px;">SUCCESS</div>
<div class="t" style="left:2069.40px;top:1602.32px;font-size:21px;line-height:21px;color:#94a3b8;letter-spacing:0.577px;">[Orchestrator Agent]</div>
<div class="t" style="left:2284.00px;top:1602.32px;font-size:21px;line-height:21px;color:#e2e8f0;letter-spacing:0.415px;">Agent ready [Memory: 272MB, Tools: 4]</div>
<div style="left:1759px;top:1640.3px;width:1069px;height:1.5px;background:rgba(148,163,184,.09);"></div>
<div class="t" style="left:1759.00px;top:1652.15px;font-size:21px;line-height:21px;color:#64748b;letter-spacing:0.961px;">13:30:07.333</div>
<div class="t" style="left:1944.00px;top:1653.42px;font-size:19.5px;line-height:19.5px;color:#8b5cf6;font-weight:700;letter-spacing:0.095px;">DEBUG</div>
<div class="t" style="left:2069.40px;top:1652.15px;font-size:21px;line-height:21px;color:#94a3b8;letter-spacing:0.109px;">[Process Manager]</div>
<div class="t" style="left:2284.00px;top:1652.15px;font-size:21px;line-height:21px;color:#e2e8f0;letter-spacing:0.525px;">Spawning Orchestrator Agent [PID: proc-wy0f03]</div>
<div style="left:1759px;top:1690.13px;width:1069px;height:1.5px;background:rgba(148,163,184,.09);"></div>
<div class="t" style="left:1759.00px;top:1701.98px;font-size:21px;line-height:21px;color:#64748b;letter-spacing:0.961px;">13:30:06.133</div>
<div class="t" style="left:1944.00px;top:1703.25px;font-size:19.5px;line-height:19.5px;color:#3b82f6;font-weight:700;letter-spacing:1.402px;">INFO</div>
<div class="t" style="left:2069.40px;top:1701.98px;font-size:21px;line-height:21px;color:#94a3b8;letter-spacing:0.033px;">[Message Bus]</div>
<div class="t" style="left:2284.00px;top:1701.98px;font-size:21px;line-height:21px;color:#e2e8f0;letter-spacing:0.237px;">Setting up message queue</div>
<div style="left:1759px;top:1739.96px;width:1069px;height:1.5px;background:rgba(148,163,184,.09);"></div>
<div class="t" style="left:1759.00px;top:1751.81px;font-size:21px;line-height:21px;color:#64748b;letter-spacing:0.961px;clip-path:inset(0 0 2.01px 0);">13:30:05.744</div>
<div class="t" style="left:1944.00px;top:1753.08px;font-size:19.5px;line-height:19.5px;color:#22c55e;font-weight:700;letter-spacing:-0.264px;clip-path:inset(0 0 2.01px 0);">SUCCESS</div>
<div class="t" style="left:2069.40px;top:1751.81px;font-size:21px;line-height:21px;color:#94a3b8;letter-spacing:0.382px;clip-path:inset(0 0 2.01px 0);">[Tool Registry]</div>
<div class="t" style="left:2284.00px;top:1751.81px;font-size:21px;line-height:21px;color:#e2e8f0;letter-spacing:0.475px;clip-path:inset(0 0 2.01px 0);">6 tools registered successfully</div>
<div style="left:2898px;top:962.4px;width:896px;height:541.6px;background:#fff;border:1.5px solid #e2e8f0;border-left:4.5px solid #8b5cf6;border-radius:24px;overflow:hidden;box-shadow:0 6px 22px rgba(15,23,42,.055),0 2px 5px rgba(15,23,42,.03);"><div style="left:0;top:0;width:100%;height:92.3px;background:linear-gradient(135deg,#f8fafc,#f1f5f9);border-bottom:1.5px solid #e2e8f0;"></div></div>
<svg style="left:2935.95px;top:994.32px;" width="26.50" height="27.35" viewBox="8 0 496 512" preserveAspectRatio="none"><path fill="#8b5cf6" d="M120 56c0-30.9 25.1-56 56-56h24c17.7 0 32 14.3 32 32v448c0 17.7-14.3 32-32 32h-32c-29.8 0-54.9-20.4-62-48h-2c-44.2 0-80-35.8-80-80 0-18 6-34.6 16-48-19.4-14.6-32-37.8-32-64 0-30.9 17.6-57.8 43.2-71.1-7.1-12-11.2-26-11.2-40.9 0-44.2 35.8-80 80-80zm272 0v24c44.2 0 80 35.8 80 80 0 15-4.1 29-11.2 40.9C486.5 214.2 504 241 504 272c0 26.2-12.6 49.4-32 64 10 13.4 16 30 16 48 0 44.2-35.8 80-80 80h-2c-7.1 27.6-32.2 48-62 48h-32c-17.7 0-32-14.3-32-32V32c0-17.7 14.3-32 32-32h24c30.9 0 56 25.1 56 56"/></svg>
<div class="t" style="left:2981.30px;top:995.57px;font-size:26.5px;line-height:26.5px;color:#1e293b;letter-spacing:0.628px;-webkit-text-stroke:1.1px #1e293b;">LLM Configuration</div>
<div class="t" style="left:2925.60px;top:1098.72px;font-size:21px;line-height:21px;color:#64748b;letter-spacing:0.399px;">Model</div>
<div style="left:2925px;top:1141.8px;width:846px;height:1.5px;background:repeating-linear-gradient(90deg,#dfe5ec 0 5px,transparent 5px 8.94px);"></div>
<div style="left:3501px;top:1087px;width:269.7px;height:47px;background:#f1f5f9;border-radius:9px;"></div>
<div class="t" style="left:3512.40px;top:1101.59px;font-size:17.5px;line-height:17.5px;color:#1e293b;font-weight:700;letter-spacing:0.526px;">claude-3-5-sonnet-20241022</div>
<div class="t" style="left:2925.60px;top:1171.22px;font-size:21px;line-height:21px;color:#64748b;letter-spacing:0.328px;">Provider</div>
<div class="t" style="left:3672.70px;top:1171.22px;font-size:21px;line-height:21px;color:#1e293b;font-weight:700;letter-spacing:-0.145px;">Anthropic</div>
<div style="left:2925px;top:1210.6px;width:846px;height:1.5px;background:repeating-linear-gradient(90deg,#dfe5ec 0 5px,transparent 5px 8.94px);"></div>
<div class="t" style="left:2925.60px;top:1239.82px;font-size:21px;line-height:21px;color:#64748b;letter-spacing:0.036px;">Max Tokens</div>
<div class="t" style="left:3713.10px;top:1239.82px;font-size:21px;line-height:21px;color:#1e293b;font-weight:700;letter-spacing:1.259px;">8,192</div>
<div style="left:2925px;top:1277.2px;width:846px;height:1.5px;background:repeating-linear-gradient(90deg,#dfe5ec 0 5px,transparent 5px 8.94px);"></div>
<div class="t" style="left:2925.60px;top:1307.22px;font-size:21px;line-height:21px;color:#64748b;letter-spacing:0.581px;">Temperature</div>
<div class="t" style="left:3738.30px;top:1307.22px;font-size:21px;line-height:21px;color:#1e293b;font-weight:700;letter-spacing:1.598px;">0.3</div>
<div style="left:2925px;top:1346.3px;width:846px;height:1.5px;background:repeating-linear-gradient(90deg,#dfe5ec 0 5px,transparent 5px 8.94px);"></div>
<div class="t" style="left:2925.60px;top:1374.62px;font-size:21px;line-height:21px;color:#64748b;letter-spacing:0.385px;">Top-P</div>
<div class="t" style="left:3725.50px;top:1374.62px;font-size:21px;line-height:21px;color:#1e293b;font-weight:700;letter-spacing:1.442px;">0.95</div>
<div style="left:2925px;top:1413.6px;width:846px;height:1.5px;background:repeating-linear-gradient(90deg,#dfe5ec 0 5px,transparent 5px 8.94px);"></div>
<div class="t" style="left:2925.60px;top:1443.42px;font-size:21px;line-height:21px;color:#64748b;letter-spacing:0.277px;">API Version</div>
<div class="t" style="left:3651.00px;top:1443.42px;font-size:21px;line-height:21px;color:#1e293b;font-weight:700;letter-spacing:1.364px;">2024-01-01</div>
<div style="left:2898px;top:1535.3px;width:896px;height:408.6px;background:#fff;border:1.5px solid #e2e8f0;border-left:4.5px solid #8b5cf6;border-radius:24px;overflow:hidden;box-shadow:0 6px 22px rgba(15,23,42,.055),0 2px 5px rgba(15,23,42,.03);"><div style="left:0;top:0;width:100%;height:93.3px;background:linear-gradient(135deg,#f8fafc,#f1f5f9);border-bottom:1.5px solid #e2e8f0;"></div></div>
<svg style="left:2937.00px;top:1568.29px;" width="24.00" height="27.43" viewBox="0 0 448 512" preserveAspectRatio="none"><path fill="#3b82f6" d="M448 205.8c-14.8 9.8-31.8 17.7-49.5 24-47 16.8-108.7 26.2-174.5 26.2s-127.6-9.5-174.5-26.2c-17.6-6.3-34.7-14.2-49.5-24V288c0 44.2 100.3 80 224 80s224-35.8 224-80zm0-77.8V80c0-44.2-100.3-80-224-80S0 35.8 0 80v48c0 44.2 100.3 80 224 80s224-35.8 224-80m-49.5 261.8C351.6 406.5 289.9 416 224 416s-127.6-9.5-174.5-26.2c-17.6-6.3-34.7-14.2-49.5-24V432c0 44.2 100.3 80 224 80s224-35.8 224-80v-66.2c-14.8 9.8-31.8 17.7-49.5 24"/></svg>
<div class="t" style="left:2981.30px;top:1569.17px;font-size:26.5px;line-height:26.5px;color:#1e293b;letter-spacing:0.719px;-webkit-text-stroke:1.1px #1e293b;">Vector Database</div>
<div class="t" style="left:2925.60px;top:1670.22px;font-size:21px;line-height:21px;color:#64748b;letter-spacing:0.328px;">Provider</div>
<div class="t" style="left:3678.70px;top:1670.22px;font-size:21px;line-height:21px;color:#1e293b;font-weight:700;letter-spacing:-0.196px;">Pinecone</div>
<div style="left:2925px;top:1709.4px;width:846px;height:1.5px;background:repeating-linear-gradient(90deg,#dfe5ec 0 5px,transparent 5px 8.94px);"></div>
<div class="t" style="left:2925.60px;top:1742.22px;font-size:21px;line-height:21px;color:#64748b;letter-spacing:0.856px;">Index</div>
<div style="left:2925px;top:1785px;width:846px;height:1.5px;background:repeating-linear-gradient(90deg,#dfe5ec 0 5px,transparent 5px 8.94px);"></div>
<div style="left:3549px;top:1728px;width:221.7px;height:47.4px;background:#f1f5f9;border-radius:9px;"></div>
<div class="t" style="left:3560.40px;top:1744.89px;font-size:17.5px;line-height:17.5px;color:#1e293b;font-weight:700;letter-spacing:0.149px;">transit-knowledge-base</div>
<div class="t" style="left:2925.60px;top:1811.62px;font-size:21px;line-height:21px;color:#64748b;letter-spacing:0.253px;">Dimensions</div>
<div class="t" style="left:3719.90px;top:1811.62px;font-size:21px;line-height:21px;color:#1e293b;font-weight:700;letter-spacing:1.360px;">1536</div>
<div style="left:2925px;top:1852.3px;width:846px;height:1.5px;background:repeating-linear-gradient(90deg,#dfe5ec 0 5px,transparent 5px 8.94px);"></div>
<div class="t" style="left:2925.60px;top:1881.22px;font-size:21px;line-height:21px;color:#64748b;letter-spacing:0.646px;">Metric</div>
<div class="t" style="left:3706.20px;top:1881.22px;font-size:21px;line-height:21px;color:#1e293b;font-weight:700;letter-spacing:-0.406px;">cosine</div>
<div style="left:2898px;top:1973.5px;width:896px;height:300px;background:#fff;border:1.5px solid #e2e8f0;border-left:4.5px solid #8b5cf6;border-radius:24px;overflow:hidden;box-shadow:0 6px 22px rgba(15,23,42,.055),0 2px 5px rgba(15,23,42,.03);"><div style="left:0;top:0;width:100%;height:93.5px;background:linear-gradient(135deg,#f8fafc,#f1f5f9);border-bottom:1.5px solid #e2e8f0;"></div></div>
<svg style="left:2933.00px;top:2006.36px;overflow:visible;" width="34.00" height="27.88" viewBox="0 0 272 223" preserveAspectRatio="none"><path fill="#f59e0b" fill-rule="evenodd" stroke="#f59e0b" stroke-width="8" stroke-linejoin="round" d="M44.75 29.53L54.78 25.07L55.41 1.64L86.59 1.64L87.22 25.07L97.25 29.53L97.25 29.53L106.13 35.98L126.74 24.82L142.33 51.82L122.35 64.08L123.50 75.00L123.50 75.00L122.35 85.92L142.33 98.18L126.74 125.18L106.13 114.02L97.25 120.47L97.25 120.47L87.22 124.93L86.59 148.36L55.41 148.36L54.78 124.93L44.75 120.47L44.75 120.47L35.87 114.02L15.26 125.18L-0.33 98.18L19.65 85.92L18.50 75.00L18.50 75.00L19.65 64.08L-0.33 51.82L15.26 24.82L35.87 35.98L44.75 29.53ZM45.50 75.00a25.50 25.50 0 1 0 51.00 0a25.50 25.50 0 1 0 -51.00 0ZM243.25 124.45L247.60 134.21L270.40 134.82L270.40 165.18L247.60 165.79L243.25 175.55L243.25 175.55L236.97 184.19L247.85 204.25L221.56 219.43L209.62 199.98L199.00 201.10L199.00 201.10L188.38 199.98L176.44 219.43L150.15 204.25L161.03 184.19L154.75 175.55L154.75 175.55L150.40 165.79L127.60 165.18L127.60 134.82L150.40 134.21L154.75 124.45L154.75 124.45L161.03 115.81L150.15 95.75L176.44 80.57L188.38 100.02L199.00 98.90L199.00 98.90L209.62 100.02L221.56 80.57L247.85 95.75L236.97 115.81L243.25 124.45ZM174.18 150.00a24.82 24.82 0 1 0 49.64 0a24.82 24.82 0 1 0 -49.64 0Z"/></svg>
<div class="t" style="left:2981.30px;top:2008.77px;font-size:26.5px;line-height:26.5px;color:#1e293b;letter-spacing:1.300px;-webkit-text-stroke:1.1px #1e293b;">Orchestrator</div>
<div style="left:3794.5px;top:601px;width:45.5px;height:71px;background:#fff;box-shadow:0 0 4px 1px #fff;"></div>
<div style="left:3774.2px;top:608px;width:55.8px;height:56.2px;background:radial-gradient(circle at 45% 55%,#a9c0fa 0%,#8ea9f9 55%,#809df8 100%);border-radius:28px 5px 5px 28px;"></div>
<div class="t" style="left:3787.00px;top:622.48px;font-size:15.5px;line-height:15.5px;color:rgba(255,255,255,.92);font-family:"Liberation Sans","Noto Sans CJK SC",sans-serif;font-weight:300;">文</div>
<div class="t" style="left:3800.80px;top:629.04px;font-size:25px;line-height:25px;color:rgba(255,255,255,.92);">A</div>
<svg style="left:3784px;top:618px" width="40" height="40" viewBox="0 0 40 40"><path d="M23 5h9.2v8.5M4.2 24v8.4h8.4" fill="none" stroke="rgba(255,255,255,.92)" stroke-width="1.9"/></svg>
</main>
<footer class="grp">
<div style="left:520px;top:2017.8px;width:3320px;height:142.2px;background:#fff;border-top:1.5px solid #e2e8f0;box-shadow:0 -4px 14px rgba(15,23,42,.05);"></div>
<div style="left:3178px;top:2049.6px;width:233px;height:79.5px;background:#fff;border:1.5px solid #e2e8f0;border-radius:15px;"></div>
<svg style="left:3219.95px;top:2079.42px;" width="23.50" height="20.15" viewBox="0.0249996 63.925 447.975 384.15" preserveAspectRatio="none"><path fill="#475569" d="M9.400 233.400c-12.500 12.500-12.500 32.800 0 45.300l160 160c12.500 12.500 32.800 12.500 45.300 0s12.500-32.800 0-45.300L109.200 288 416 288c17.700 0 32-14.300 32-32s-14.300-32-32-32l-306.700 0L214.600 118.600c12.500-12.500 12.500-32.800 0-45.300s-32.800-12.500-45.300 0l-160 160z"/></svg>
<div class="t" style="left:3264.40px;top:2076.99px;font-size:26px;line-height:26px;color:#475569;letter-spacing:0.692px;-webkit-text-stroke:0.5px #475569;">Previous</div>
<div style="left:3433.7px;top:2049.6px;width:361.3px;height:79.5px;background:#3b82f6;border-radius:15px;"></div>
<div class="t" style="left:3471.00px;top:2076.99px;font-size:26px;line-height:26px;color:#fff;font-weight:700;letter-spacing:0.035px;">Next: AI Reasoning</div>
<svg style="left:3728.45px;top:2079.00px;" width="24.50" height="21.01" viewBox="0 63.925 447.975 384.15" preserveAspectRatio="none"><path fill="#fff" d="M438.600 278.600c12.500-12.500 12.500-32.800 0-45.300l-160-160c-12.500-12.500-32.800-12.500-45.300 0s-12.500 32.800 0 45.300L338.800 224 32 224c-17.700 0-32 14.300-32 32s14.300 32 32 32l306.700 0L233.400 393.400c-12.500 12.500-12.500 32.800 0 45.300s32.800 12.500 45.300 0l160-160z"/></svg>
</footer>
<aside class="grp">
<div style="left:0px;top:127px;width:520px;height:2033px;background:linear-gradient(180deg,#1e293b 0%,#334155 100%);border-right:2px solid #56657a;border-left:1.5px solid #3b485c;box-shadow:5px 0 28px rgba(15,23,42,.22);"></div>
<svg style="left:64.65px;top:191.45px;" width="30.50" height="30.50" viewBox="0 0 512 512" preserveAspectRatio="none"><path fill="#94a3b8" d="M0 256a256 256 0 1 1 512 0 256 256 0 1 1-512 0M288 96a32 32 0 1 0-64 0 32 32 0 1 0 64 0m-32 320c35.3 0 64-28.7 64-64 0-16.2-6-31.1-16-42.3l69.5-138.9c5.9-11.9 1.1-26.3-10.7-32.2s-26.3-1.1-32.2 10.7l-69.5 138.9c-1.7-.1-3.4-.2-5.1-.2-35.3 0-64 28.7-64 64s28.7 64 64 64m-80-272a32 32 0 1 0-64 0 32 32 0 1 0 64 0M96 288a32 32 0 1 0 0-64 32 32 0 1 0 0 64m352-32a32 32 0 1 0-64 0 32 32 0 1 0 64 0"/></svg>
<div class="t" style="left:123.40px;top:199.04px;font-size:25px;line-height:25px;color:#e2e8f0;letter-spacing:1.211px;-webkit-text-stroke:0.9px #e2e8f0;">Dashboard</div>
<svg style="left:64.65px;top:286.76px;" width="30.50" height="26.69" viewBox="0 32 512 448" preserveAspectRatio="none"><path fill="#94a3b8" d="M64 64c0-17.7-14.3-32-32-32S0 46.3 0 64v336c0 44.2 35.8 80 80 80h400c17.7 0 32-14.3 32-32s-14.3-32-32-32H80c-8.8 0-16-7.2-16-16zm406.6 86.6c12.5-12.5 12.5-32.8 0-45.3s-32.8-12.5-45.3 0L320 210.7l-57.4-57.3c-12.5-12.5-32.8-12.5-45.3 0l-96 96c-12.5 12.5-12.5 32.8 0 45.3s32.8 12.5 45.3 0l73.4-73.4 57.4 57.4c12.5 12.5 32.8 12.5 45.3 0l128-128z"/></svg>
<div class="t" style="left:123.40px;top:292.44px;font-size:25px;line-height:25px;color:#e2e8f0;letter-spacing:1.594px;-webkit-text-stroke:0.9px #e2e8f0;">Analytics</div>
<svg style="left:32.00px;top:429.30px;" width="26.00" height="26.00" viewBox="32 0 512 512" preserveAspectRatio="none"><path fill="#64748b" d="M288 0C422.4 0 512 35.2 512 80V96l0 32c17.7 0 32 14.3 32 32v64c0 17.7-14.3 32-32 32l0 160c0 17.7-14.3 32-32 32v32c0 17.7-14.3 32-32 32H416c-17.7 0-32-14.3-32-32V448H192v32c0 17.7-14.3 32-32 32H128c-17.7 0-32-14.3-32-32l0-32c-17.7 0-32-14.3-32-32l0-160c-17.7 0-32-14.3-32-32V160c0-17.7 14.3-32 32-32h0V96h0V80C64 35.2 153.6 0 288 0zM128 160v96c0 17.7 14.3 32 32 32H272V128H160c-17.7 0-32 14.3-32 32zM304 288H416c17.7 0 32-14.3 32-32V160c0-17.7-14.3-32-32-32H304V288zM144 400a32 32 0 1 0 0-64 32 32 0 1 0 0 64zm288 0a32 32 0 1 0 0-64 32 32 0 1 0 0 64zM384 80c0-8.800-7.200-16-16-16H208c-8.800 0-16 7.200-16 16s7.200 16 16 16H368c8.800 0 16-7.200 16-16z"/></svg>
<div class="t" style="left:78.40px;top:433.07px;font-size:20px;line-height:20px;color:#94a3b8;font-weight:700;letter-spacing:2.904px;">FLEET MANAGEMENT</div>
<svg style="left:68.71px;top:534.00px;" width="22.37" height="30.00" viewBox="-0.1 0 384.1 515" preserveAspectRatio="none"><path fill="#94a3b8" d="M0 188.6C0 84.4 86 0 192 0s192 84.4 192 188.6c0 119.3-120.2 262.3-170.4 316.8-11.8 12.8-31.5 12.8-43.3 0C120.1 450.9-.1 307.9-.1 188.6zM192 256a64 64 0 1 0 0-128 64 64 0 1 0 0 128"/></svg>
<div class="t" style="left:123.40px;top:542.34px;font-size:25px;line-height:25px;color:#e2e8f0;letter-spacing:1.397px;-webkit-text-stroke:0.9px #e2e8f0;">Vehicle Tracking</div>
<svg style="left:62.90px;top:626.69px;" width="34.00" height="30.22" viewBox="0 0 576 512" preserveAspectRatio="none"><path fill="#94a3b8" d="M64 0C28.700 0 0 28.700 0 64V352c0 35.300 28.700 64 64 64H240l-10.700 32H160c-17.700 0-32 14.300-32 32s14.300 32 32 32H416c17.700 0 32-14.300 32-32s-14.300-32-32-32H346.700L336 416H512c35.300 0 64-28.700 64-64V64c0-35.300-28.700-64-64-64H64zM512 64V288H64V64H512z"/></svg>
<div class="t" style="left:123.40px;top:634.14px;font-size:25px;line-height:25px;color:#e2e8f0;letter-spacing:1.363px;-webkit-text-stroke:0.9px #e2e8f0;">Control Center</div>
<svg style="left:64.40px;top:718.50px;" width="31.00" height="31.00" viewBox="0 0 512 512" preserveAspectRatio="none"><path fill="#94a3b8" d="M352 320c88.4 0 160-71.600 160-160c0-15.300-2.200-30.100-6.200-44.200c-3.100-10.800-16.400-13.200-24.300-5.300l-76.800 76.800c-3 3-7.100 4.700-11.300 4.700H336c-8.800 0-16-7.200-16-16V118.600c0-4.200 1.700-8.300 4.700-11.300l76.800-76.800c7.900-7.900 5.400-21.200-5.300-24.300C382.100 2.200 367.300 0 352 0C263.600 0 192 71.600 192 160c0 19.100 3.400 37.500 9.500 54.500L19.900 396.100C7.200 408.800 0 426.100 0 444.100C0 481.600 30.400 512 67.900 512c18 0 35.300-7.200 48-19.900L297.500 310.500c17 6.200 35.400 9.500 54.500 9.500zM80 408a24 24 0 1 1 0 48 24 24 0 1 1 0-48z"/></svg>
<div class="t" style="left:123.40px;top:726.34px;font-size:25px;line-height:25px;color:#e2e8f0;letter-spacing:1.474px;-webkit-text-stroke:0.9px #e2e8f0;">Maintenance</div>
<svg style="left:60.65px;top:810.60px;" width="38.50" height="30.80" viewBox="-0.0109444 0 639.978 512" preserveAspectRatio="none"><path fill="#94a3b8" d="M208 352c114.900 0 208-78.800 208-176S322.900 0 208 0S0 78.800 0 176c0 38.600 14.700 74.300 39.600 103.400c-3.500 9.400-8.700 17.700-14.200 24.700c-4.800 6.200-9.700 11-13.300 14.300c-1.800 1.600-3.300 2.900-4.300 3.700c-.5 .4-.9 .7-1.100 .8l-.2 .2 0 0 0 0C1 327.200-1.400 334.400 .8 340.900S9.100 352 16 352c21.800 0 43.800-5.600 62.100-12.500c9.200-3.500 17.800-7.400 25.300-11.400C134.100 343.300 169.800 352 208 352zM448 176c0 112.300-99.100 196.900-216.500 207C255.800 457.400 336.400 512 432 512c38.200 0 73.900-8.700 104.700-23.900c7.500 4 16 7.900 25.200 11.400c18.300 6.900 40.300 12.500 62.100 12.500c6.900 0 13.100-4.500 15.200-11.100c2.100-6.600-.2-13.800-5.800-17.900l0 0 0 0-.2-.2c-.2-.2-.6-.4-1.100-.8c-1-.8-2.500-2-4.300-3.700c-3.600-3.300-8.500-8.100-13.300-14.300c-5.500-7-10.700-15.400-14.200-24.700c24.900-29 39.600-64.700 39.600-103.400c0-92.800-84.900-168.900-192.600-175.500c.4 5.100 .6 10.300 .6 15.500z"/></svg>
<div class="t" style="left:123.40px;top:818.34px;font-size:25px;line-height:25px;color:#e2e8f0;letter-spacing:1.626px;-webkit-text-stroke:0.9px #e2e8f0;">Communication</div>
<svg style="left:64.40px;top:903.97px;" width="31.00" height="29.06" viewBox="-0.0206618 0 512.041 480" preserveAspectRatio="none"><path fill="#94a3b8" d="M256 0c14.7 0 28.2 8.1 35.2 21l216 400c6.7 12.4 6.4 27.4-.8 39.5S486.1 480 472 480H40c-14.1 0-27.2-7.4-34.4-19.5s-7.5-27.1-.8-39.5l216-400c7-12.9 20.5-21 35.2-21m0 352a32 32 0 1 0 0 64 32 32 0 1 0 0-64m0-192c-18.2 0-32.7 15.5-31.4 33.7l7.4 104c.9 12.5 11.4 22.3 23.9 22.3 12.6 0 23-9.7 23.9-22.3l7.4-104c1.3-18.2-13.1-33.7-31.4-33.7z"/></svg>
<div class="t" style="left:123.40px;top:910.84px;font-size:25px;line-height:25px;color:#e2e8f0;letter-spacing:1.594px;-webkit-text-stroke:0.9px #e2e8f0;">Disruptions</div>
<svg style="left:29.00px;top:1048.46px;" width="32.00" height="25.48" viewBox="0 2.475 640 509.525" preserveAspectRatio="none"><path fill="#64748b" d="M0 488V171.300c0-26.200 15.900-49.700 40.200-59.400L308.100 4.800c7.600-3.100 16.100-3.100 23.800 0L599.800 111.900c24.300 9.700 40.200 33.300 40.200 59.400V488c0 13.300-10.700 24-24 24H568c-13.300 0-24-10.700-24-24V224c0-17.700-14.300-32-32-32H128c-17.700 0-32 14.300-32 32V488c0 13.300-10.700 24-24 24H24c-13.300 0-24-10.700-24-24zm488 24l-336 0c-13.300 0-24-10.700-24-24V432H512l0 56c0 13.300-10.700 24-24 24zM128 400V336H512v64H128zm0-96V224H512l0 80H128z"/></svg>
<div class="t" style="left:78.40px;top:1051.97px;font-size:20px;line-height:20px;color:#94a3b8;font-weight:700;letter-spacing:3.209px;">DEPOT &amp; MAINTENANCE</div>
<svg style="left:60.90px;top:1152.27px;" width="38.00" height="30.25" viewBox="0 2.475 640 509.525" preserveAspectRatio="none"><path fill="#94a3b8" d="M0 488V171.300c0-26.200 15.900-49.700 40.200-59.400L308.100 4.800c7.600-3.100 16.100-3.100 23.800 0L599.800 111.900c24.300 9.700 40.200 33.300 40.200 59.400V488c0 13.300-10.700 24-24 24H568c-13.300 0-24-10.700-24-24V224c0-17.700-14.300-32-32-32H128c-17.700 0-32 14.300-32 32V488c0 13.300-10.700 24-24 24H24c-13.300 0-24-10.700-24-24zm488 24l-336 0c-13.300 0-24-10.700-24-24V432H512l0 56c0 13.300-10.700 24-24 24zM128 400V336H512v64H128zm0-96V224H512l0 80H128z"/></svg>
<div class="t" style="left:123.40px;top:1159.74px;font-size:25px;line-height:25px;color:#e2e8f0;letter-spacing:1.430px;-webkit-text-stroke:0.9px #e2e8f0;">Depot Operations</div>
<svg style="left:33.50px;top:1298.18px;" width="23.00" height="24.64" viewBox="0 0 448 480" preserveAspectRatio="none"><path fill="#64748b" d="M128 0c17.7 0 32 14.3 32 32v32h128V32c0-17.7 14.3-32 32-32s32 14.3 32 32v32h32c35.3 0 64 28.7 64 64v288c0 35.3-28.7 64-64 64H64c-35.3 0-64-28.7-64-64V128c0-35.3 28.7-64 64-64h32V32c0-17.7 14.3-32 32-32M64 240v32c0 8.8 7.2 16 16 16h32c8.8 0 16-7.2 16-16v-32c0-8.8-7.2-16-16-16H80c-8.8 0-16 7.2-16 16m128 0v32c0 8.8 7.2 16 16 16h32c8.8 0 16-7.2 16-16v-32c0-8.8-7.2-16-16-16h-32c-8.8 0-16 7.2-16 16m144-16c-8.8 0-16 7.2-16 16v32c0 8.8 7.2 16 16 16h32c8.8 0 16-7.2 16-16v-32c0-8.8-7.2-16-16-16zM64 368v32c0 8.8 7.2 16 16 16h32c8.8 0 16-7.2 16-16v-32c0-8.8-7.2-16-16-16H80c-8.8 0-16 7.2-16 16m144-16c-8.8 0-16 7.2-16 16v32c0 8.8 7.2 16 16 16h32c8.8 0 16-7.2 16-16v-32c0-8.8-7.2-16-16-16zm112 16v32c0 8.8 7.2 16 16 16h32c8.8 0 16-7.2 16-16v-32c0-8.8-7.2-16-16-16h-32c-8.8 0-16 7.2-16 16"/></svg>
<div class="t" style="left:78.40px;top:1301.27px;font-size:20px;line-height:20px;color:#94a3b8;font-weight:700;letter-spacing:3.418px;">SCHEDULING</div>
<svg style="left:66.65px;top:1402.60px;" width="26.50" height="28.39" viewBox="0 0 448 480" preserveAspectRatio="none"><path fill="#94a3b8" d="M320 0c17.7 0 32 14.3 32 32v32h32c35.3 0 64 28.7 64 64v288c0 35.3-28.7 64-64 64H64c-35.3 0-64-28.7-64-64V128c0-35.3 28.7-64 64-64h32V32c0-17.7 14.3-32 32-32s32 14.3 32 32v32h128V32c0-17.7 14.3-32 32-32m22 161.7c-10.7-7.8-25.7-5.4-33.5 5.3L189.1 331.2 137 279.1c-9.4-9.4-24.6-9.4-33.9 0s-9.4 24.6 0 33.9l72 72c5 5 11.9 7.5 18.8 7s13.4-4.1 17.5-9.8l135.9-187c7.8-10.7 5.4-25.7-5.3-33.5"/></svg>
<div class="t" style="left:123.40px;top:1409.14px;font-size:25px;line-height:25px;color:#e2e8f0;letter-spacing:1.369px;-webkit-text-stroke:0.9px #e2e8f0;">Schedules</div>
<svg style="left:64.65px;top:1494.95px;" width="30.50" height="30.50" viewBox="0 0 512 512" preserveAspectRatio="none"><path fill="#94a3b8" d="M512 96c0 50.2-59.1 125.1-84.6 155-3.8 4.4-9.4 6.1-14.5 5H320c-17.7 0-32 14.3-32 32s14.3 32 32 32h96c53 0 96 43 96 96s-43 96-96 96H139.6c8.7-9.9 19.3-22.6 30-36.8 6.3-8.4 12.8-17.6 19-27.2H416c17.7 0 32-14.3 32-32s-14.3-32-32-32h-96c-53 0-96-43-96-96s43-96 96-96h39.8c-21-31.5-39.8-67.7-39.8-96 0-53 43-96 96-96s96 43 96 96M117.1 489.1c-3.8 4.3-7.2 8.1-10.1 11.3l-1.8 2-.2-.2c-6 4.6-14.6 4-20-1.8C59.8 473 0 402.5 0 352c0-53 43-96 96-96s96 43 96 96c0 30-21.1 67-43.5 97.9-10.7 14.7-21.7 28-30.8 38.5zM128 352a32 32 0 1 0-64 0 32 32 0 1 0 64 0m288-224a32 32 0 1 0 0-64 32 32 0 1 0 0 64"/></svg>
<div class="t" style="left:123.40px;top:1502.54px;font-size:25px;line-height:25px;color:#e2e8f0;letter-spacing:1.216px;-webkit-text-stroke:0.9px #e2e8f0;">Routes</div>
<svg style="left:28.75px;top:1639.50px;" width="32.50" height="26.00" viewBox="0 0 640 512" preserveAspectRatio="none"><path fill="#64748b" d="M144 0a80 80 0 1 1 0 160A80 80 0 1 1 144 0zM512 0a80 80 0 1 1 0 160A80 80 0 1 1 512 0zM0 298.700C0 239.800 47.800 192 106.700 192h42.700c15.900 0 31 3.500 44.600 9.700c-1.300 7.200-1.900 14.700-1.900 22.300c0 38.200 16.800 72.500 43.300 96c-.2 0-.4 0-.7 0H21.300C9.600 320 0 310.400 0 298.700zM405.300 320c-.2 0-.4 0-.7 0c26.600-23.500 43.300-57.800 43.300-96c0-7.600-.7-15-1.900-22.300c13.600-6.300 28.700-9.700 44.600-9.700h42.700C592.200 192 640 239.800 640 298.700c0 11.800-9.600 21.300-21.300 21.300H405.300zM224 224a96 96 0 1 1 192 0 96 96 0 1 1 -192 0zM128 485.300C128 411.700 187.700 352 261.300 352H378.700C452.300 352 512 411.700 512 485.300c0 14.700-11.900 26.700-26.700 26.700H154.700c-14.700 0-26.700-11.900-26.700-26.700z"/></svg>
<div class="t" style="left:78.40px;top:1643.27px;font-size:20px;line-height:20px;color:#94a3b8;font-weight:700;letter-spacing:2.861px;">PASSENGERS</div>
<svg style="left:61.15px;top:1741.50px;" width="37.50" height="30.00" viewBox="0 0 640 512" preserveAspectRatio="none"><path fill="#94a3b8" d="M144 0a80 80 0 1 1 0 160A80 80 0 1 1 144 0zM512 0a80 80 0 1 1 0 160A80 80 0 1 1 512 0zM0 298.700C0 239.800 47.800 192 106.700 192h42.700c15.900 0 31 3.500 44.600 9.700c-1.300 7.200-1.900 14.700-1.900 22.300c0 38.200 16.800 72.500 43.300 96c-.2 0-.4 0-.7 0H21.300C9.600 320 0 310.400 0 298.700zM405.300 320c-.2 0-.4 0-.7 0c26.600-23.500 43.300-57.800 43.300-96c0-7.600-.7-15-1.900-22.300c13.600-6.300 28.700-9.700 44.600-9.700h42.700C592.200 192 640 239.800 640 298.700c0 11.800-9.600 21.300-21.300 21.300H405.300zM224 224a96 96 0 1 1 192 0 96 96 0 1 1 -192 0zM128 485.300C128 411.700 187.700 352 261.300 352H378.700C452.300 352 512 411.700 512 485.300c0 14.700-11.900 26.700-26.700 26.700H154.700c-14.700 0-26.700-11.900-26.700-26.700z"/></svg>
<div class="t" style="left:123.40px;top:1750.84px;font-size:25px;line-height:25px;color:#e2e8f0;letter-spacing:1.402px;-webkit-text-stroke:0.9px #e2e8f0;">Passenger Info</div>
<svg style="left:64.90px;top:1835.12px;" width="30.00" height="30.97" viewBox="8 0 496 512" preserveAspectRatio="none"><path fill="#94a3b8" d="M120 56c0-30.9 25.1-56 56-56h24c17.7 0 32 14.3 32 32v448c0 17.7-14.3 32-32 32h-32c-29.8 0-54.9-20.4-62-48h-2c-44.2 0-80-35.8-80-80 0-18 6-34.6 16-48-19.4-14.6-32-37.8-32-64 0-30.9 17.6-57.8 43.2-71.1-7.1-12-11.2-26-11.2-40.9 0-44.2 35.8-80 80-80zm272 0v24c44.2 0 80 35.8 80 80 0 15-4.1 29-11.2 40.9C486.5 214.2 504 241 504 272c0 26.2-12.6 49.4-32 64 10 13.4 16 30 16 48 0 44.2-35.8 80-80 80h-2c-7.1 27.6-32.2 48-62 48h-32c-17.7 0-32-14.3-32-32V32c0-17.7 14.3-32 32-32h24c30.9 0 56 25.1 56 56"/></svg>
<div class="t" style="left:123.40px;top:1842.94px;font-size:25px;line-height:25px;color:#e2e8f0;letter-spacing:1.618px;-webkit-text-stroke:0.9px #e2e8f0;">Predictive Arrivals</div>
<svg style="left:62.90px;top:1927.45px;" width="34.00" height="31.49" viewBox="15.9 8.02005 544.1 503.98" preserveAspectRatio="none"><path fill="#94a3b8" d="M87.9 11.5c-11.3-6.9-26.1-3.2-33 8.1-24.8 41-39 89.1-39 140.4s14.2 99.4 39 140.4c6.9 11.3 21.6 15 33 8.1s15-21.6 8.1-33C75.7 241.9 64 202.3 64 160S75.7 78.1 96.1 44.4c6.9-11.3 3.2-26.1-8.1-33zm400.1 0c-11.3 6.9-15 21.6-8.1 33 20.4 33.7 32.1 73.3 32.1 115.6s-11.7 81.9-32.1 115.6c-6.9 11.3-3.2 26.1 8.1 33s26.1 3.2 33-8.1c24.8-41 39-89.1 39-140.4s-14.2-99.6-39-140.6c-6.9-11.3-21.6-15-33-8.1M320 215.4c19.1-11.1 32-31.7 32-55.4 0-35.3-28.7-64-64-64s-64 28.7-64 64c0 23.7 12.9 44.4 32 55.4V480c0 17.7 14.3 32 32 32s32-14.3 32-32zM180.2 91c7.2-11.2 3.9-26-7.2-33.2s-26-3.9-33.2 7.2c-17.6 27.4-27.8 60-27.8 95s10.2 67.6 27.8 95c7.2 11.2 22 14.4 33.2 7.2s14.4-22 7.2-33.2c-12.8-19.9-20.2-43.6-20.2-69s7.4-49.1 20.2-69m256-26c-7.2-11.2-22-14.4-33.2-7.2s-14.4 22-7.2 33.2c12.8 19.9 20.2 43.6 20.2 69s-7.4 49.1-20.2 69c-7.2 11.2-3.9 26 7.2 33.2s26 3.9 33.2-7.2c17.6-27.4 27.8-60 27.8-95s-10.2-67.6-27.8-95"/></svg>
<div class="t" style="left:123.40px;top:1935.54px;font-size:25px;line-height:25px;color:#e2e8f0;letter-spacing:1.606px;-webkit-text-stroke:0.9px #e2e8f0;">Real-Time Info</div>
<div style="left:0px;top:2015.5px;width:519px;height:144.5px;background:#1e293b;border-top:1.5px solid #3f4b5f;"></div>
<div style="left:31px;top:2047px;width:457px;height:79px;background:rgba(239,68,68,.08);border:1.5px solid rgba(239,68,68,.3);border-radius:14px;"></div>
<svg style="left:195.55px;top:2074.06px;" width="27.30" height="23.89" viewBox="0 32 512.05 448" preserveAspectRatio="none"><path fill="#f87171" d="M505 273c9.4-9.4 9.4-24.6 0-33.9L361 95c-6.9-6.9-17.2-8.9-26.2-5.2S320 102.3 320 112v80H208c-26.5 0-48 21.5-48 48v32c0 26.5 21.5 48 48 48h112v80c0 9.7 5.8 18.5 14.8 22.2s19.3 1.7 26.2-5.2zM160 96c17.7 0 32-14.3 32-32s-14.3-32-32-32H96C43 32 0 75 0 128v256c0 53 43 96 96 96h64c17.7 0 32-14.3 32-32s-14.3-32-32-32H96c-17.7 0-32-14.3-32-32V128c0-17.7 14.3-32 32-32z"/></svg>
<div class="t" style="left:242.00px;top:2073.61px;font-size:25.5px;line-height:25.5px;color:#f87171;letter-spacing:0.800px;-webkit-text-stroke:0.5px #f87171;">Logout</div>
</aside>
<header class="grp">
<div style="left:0px;top:0px;width:3840px;height:128.3px;background:linear-gradient(90deg,#1e293b 0%,#334155 55%,#475569 100%);box-shadow:0 4px 22px rgba(15,23,42,.2);"></div>
<div style="left:0px;top:125.9px;width:3840px;height:1.4px;background:linear-gradient(90deg,#4a586e,#6d7b90);"></div>
<div style="left:45px;top:21px;width:84.5px;height:84.5px;background:linear-gradient(135deg,#4b5b73,#66768e);border-radius:19px;box-shadow:0 4px 14px rgba(0,0,0,.2);"></div>
<svg style="left:67.90px;top:44.15px;" width="38.00" height="38.00" viewBox="32 0 512 512" preserveAspectRatio="none"><path fill="#fff" d="M288 0C422.4 0 512 35.2 512 80V96l0 32c17.7 0 32 14.3 32 32v64c0 17.7-14.3 32-32 32l0 160c0 17.7-14.3 32-32 32v32c0 17.7-14.3 32-32 32H416c-17.7 0-32-14.3-32-32V448H192v32c0 17.7-14.3 32-32 32H128c-17.7 0-32-14.3-32-32l0-32c-17.7 0-32-14.3-32-32l0-160c-17.7 0-32-14.3-32-32V160c0-17.7 14.3-32 32-32h0V96h0V80C64 35.2 153.6 0 288 0zM128 160v96c0 17.7 14.3 32 32 32H272V128H160c-17.7 0-32 14.3-32 32zM304 288H416c17.7 0 32-14.3 32-32V160c0-17.7-14.3-32-32-32H304V288zM144 400a32 32 0 1 0 0-64 32 32 0 1 0 0 64zm288 0a32 32 0 1 0 0-64 32 32 0 1 0 0 64zM384 80c0-8.800-7.200-16-16-16H208c-8.800 0-16 7.200-16 16s7.200 16 16 16H368c8.800 0 16-7.200 16-16z"/></svg>
<div class="t" style="left:152.30px;top:36.17px;font-size:33px;line-height:33px;color:#fff;font-weight:700;letter-spacing:-1.054px;">Nexgile-TransAgent</div>
<div class="t" style="left:152.30px;top:73.22px;font-size:21px;line-height:21px;color:#cbd5e1;letter-spacing:1.572px;-webkit-text-stroke:0.8px #cbd5e1;">The Multi-Agent Platform for Next-Gen Transit Operations.</div>
<div style="left:3126px;top:25.5px;width:77px;height:76.5px;background:#1e293b;border-radius:18px;opacity:.92;"></div>
<svg style="left:3149.60px;top:47.49px;" width="30.00" height="32.02" viewBox="1.51016 -16 509.636 544" preserveAspectRatio="none"><path fill="#e2e8f0" d="M195.1 9.5c3-14.8 16.1-25.5 31.3-25.5h59.8c15.2 0 28.3 10.7 31.3 25.5l14.5 70c14.1 6 27.3 13.7 39.3 22.8l67.8-22.5c14.4-4.8 30.2 1.2 37.8 14.4l29.9 51.8c7.6 13.2 4.9 29.8-6.5 39.9L447 233.3c.9 7.4 1.3 15 1.3 22.7s-.5 15.3-1.3 22.7l53.4 47.5c11.4 10.1 14 26.8 6.5 39.9L477 417.9c-7.6 13.1-23.4 19.2-37.8 14.4l-67.8-22.5c-12.1 9.1-25.3 16.7-39.3 22.8l-14.4 69.9c-3.1 14.9-16.2 25.5-31.3 25.5h-59.8c-15.2 0-28.3-10.7-31.3-25.5l-14.4-69.9c-14.1-6-27.2-13.7-39.3-22.8l-68.1 22.5c-14.4 4.8-30.2-1.2-37.8-14.4L5.8 366.1c-7.6-13.2-4.9-29.8 6.5-39.9l53.4-47.5c-.9-7.4-1.3-15-1.3-22.7s.5-15.3 1.3-22.7l-53.4-47.5C.9 175.7-1.7 159 5.8 145.9l29.9-51.8c7.6-13.2 23.4-19.2 37.8-14.4l67.8 22.5c12.1-9.1 25.3-16.7 39.3-22.8zM256.3 336a80 80 0 1 0-.6-160 80 80 0 1 0 .6 160"/></svg>
<div style="left:3236.8px;top:25.5px;width:77px;height:76.5px;background:#1e293b;border-radius:18px;opacity:.92;"></div>
<svg style="left:3261.80px;top:48.07px;" width="27.00" height="30.86" viewBox="-4.76837e-07 0 447.9 512" preserveAspectRatio="none"><path fill="#e2e8f0" d="M224 0c-17.7 0-32 14.3-32 32v3.2C119 50 64 114.6 64 192v21.7c0 48.1-16.4 94.8-46.4 132.4l-9.8 12.2C2.7 364.6 0 372.4 0 380.5 0 400.1 15.9 416 35.5 416h376.9c19.6 0 35.5-15.9 35.5-35.5 0-8.1-2.7-15.9-7.8-22.2l-9.8-12.2c-29.9-37.6-46.3-84.3-46.3-132.4V192c0-77.4-55-142-128-156.8V32c0-17.7-14.3-32-32-32m-62 464c7.1 27.6 32.2 48 62 48s54.9-20.4 62-48z"/></svg>
<div style="left:3285.5px;top:11.5px;width:39px;height:39px;background:#ef4444;border:3px solid #1e293b;border-radius:50%;box-shadow:0 0 10px rgba(239,68,68,.5);"></div>
<div class="t" style="left:3300.13px;top:23.59px;font-size:17.5px;line-height:17.5px;color:#fff;font-weight:700;">5</div>
<div style="left:3347px;top:15.5px;width:447px;height:94.5px;background:rgba(30,41,59,.62);border-radius:22px;"></div>
<div style="left:3369px;top:27px;width:72px;height:72px;background:linear-gradient(135deg,#3b82f6,#2563eb);border-radius:50%;box-shadow:0 0 14px rgba(59,130,246,.45);"></div>
<div class="t" style="left:3387.60px;top:51.08px;font-size:24px;line-height:24px;color:#fff;font-weight:700;letter-spacing:1.456px;">JM</div>
<div class="t" style="left:3465.00px;top:41.68px;font-size:24px;line-height:24px;color:#fff;font-weight:700;letter-spacing:0.263px;">John Mitchell</div>
<div class="t" style="left:3465.00px;top:65.85px;font-size:20.5px;line-height:20.5px;color:#94a3b8;letter-spacing:0.502px;">Fleet Operations Manager</div>
<svg style="left:3748.75px;top:57.22px;" width="18.50" height="10.57" viewBox="31.925 159.925 448.15 256.05" preserveAspectRatio="none"><path fill="#94a3b8" d="M233.400 406.600c12.500 12.500 32.800 12.500 45.300 0l192-192c12.500-12.500 12.500-32.800 0-45.300s-32.800-12.500-45.300 0L256 338.700 86.600 169.400c-12.500-12.500-32.800-12.500-45.300 0s-12.500 32.800 0 45.300l192 192z"/></svg>
</header>
</div></body></html>
